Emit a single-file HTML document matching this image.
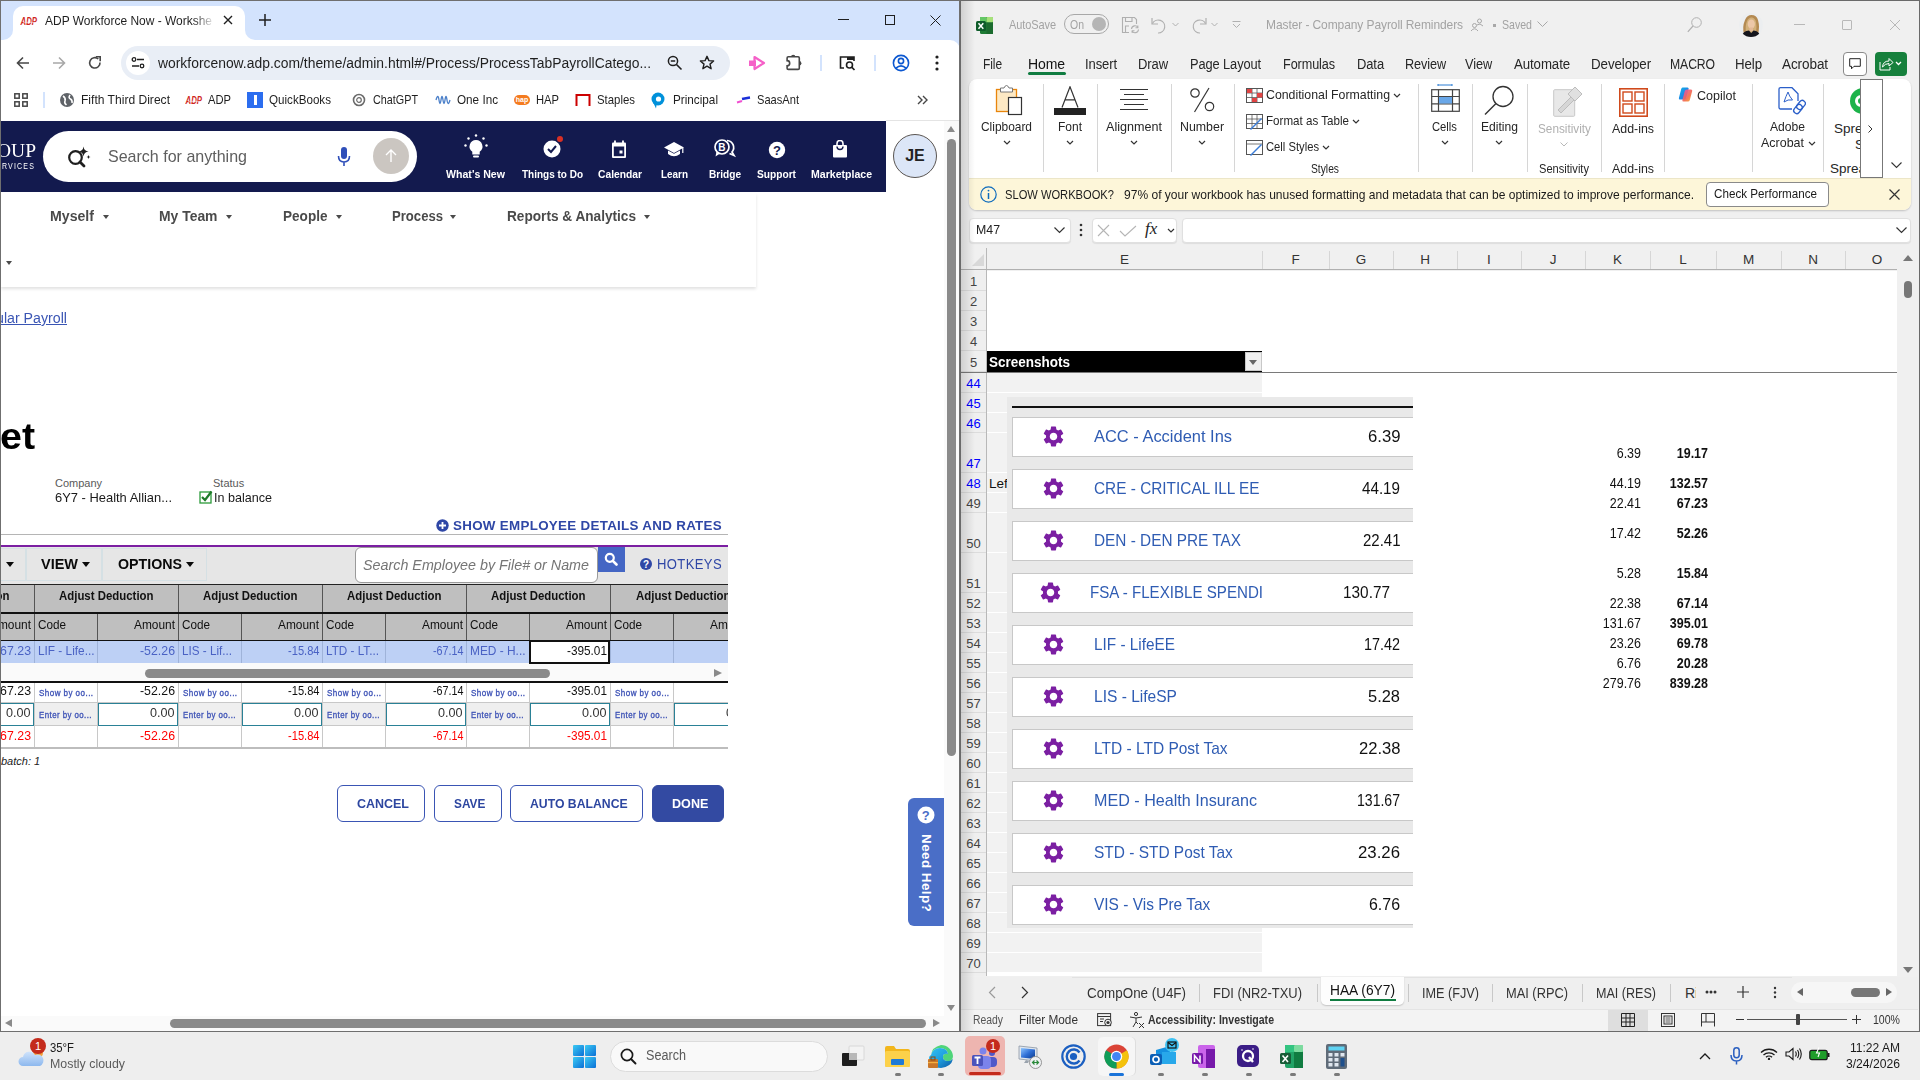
<!DOCTYPE html>
<html><head><meta charset="utf-8">
<style>
*{box-sizing:border-box}
html,body{margin:0;padding:0;width:1920px;height:1080px;overflow:hidden;background:#eeeeee;font-family:"Liberation Sans",sans-serif;}
.a{position:absolute}
.nw{white-space:nowrap}
svg{display:block}
.hl{font-size:11.5px;font-weight:bold;color:#fff;letter-spacing:0px;margin-top:0.5px}
.nav{font-size:14.5px;font-weight:bold;color:#4a4a4a}
.tri{width:0;height:0;border-left:3.5px solid transparent;border-right:3.5px solid transparent;border-top:4px solid #4a4a4a}
.tri2{width:0;height:0;border-left:4.5px solid transparent;border-right:4.5px solid transparent;border-top:5px solid #0a0a0a}
.th{font-size:13px;font-weight:bold;color:#111}
.td{font-size:13px;color:#111}
.tdn{font-size:13.5px}
.sb{font-size:9px;font-weight:normal;color:#3b50b5;letter-spacing:0.5px;-webkit-text-stroke:0.3px #3b50b5}
.btn{border:1px solid #3a55b4;border-radius:6px;background:#fff;color:#2d46a0;font-size:13px;font-weight:bold;text-align:center;line-height:35px;white-space:nowrap}
.rt{font-size:14px;color:#262626;letter-spacing:-0.1px}
.rl{font-size:13.5px;color:#262626}
.ch{font-size:13.5px;color:#333}
.rh{font-size:13px;color:#444;line-height:18px}
.card{font-size:17px;color:#2f5cb3}
.cardv{font-size:17px;color:#111}
.kl{font-size:14.5px;color:#111;transform:scaleX(0.86);transform-origin:100% 50%}
.stab{font-size:14px;color:#333}
.sbar{font-size:12px;color:#333}
.btt{font-size:13.5px;font-weight:bold;color:#2d46a0;line-height:16px}
.bm{font-size:13px;color:#1f1f1f;line-height:16px}
</style></head><body>

<!-- ================= CHROME WINDOW ================= -->
<div class="a" id="chrome" style="left:0;top:0;width:960px;height:1032px;background:#fff;overflow:hidden">
  <!-- tab strip -->
  <div class="a" style="left:0;top:0;width:960px;height:60px;background:#d3e3fd"></div>
  <!-- active tab -->
  <div class="a" style="left:13px;top:6px;width:232px;height:34px;background:#fff;border-radius:10px 10px 0 0"></div>
  <div class="a" style="left:3px;top:30px;width:10px;height:10px;background:#fff"></div>
  <div class="a" style="left:3px;top:30px;width:10px;height:10px;background:#d3e3fd;border-radius:0 0 10px 0"></div>
  <div class="a" style="left:245px;top:30px;width:10px;height:10px;background:#fff"></div>
  <div class="a" style="left:245px;top:30px;width:10px;height:10px;background:#d3e3fd;border-radius:0 0 0 10px"></div>
  <!-- toolbar white -->
  <div class="a" style="left:0;top:40px;width:960px;height:81px;background:#fff;border-radius:10px 10px 0 0"></div>
  <div class="a" style="left:0;top:40px;width:20px;height:12px;background:#fff"></div>

  <!-- tab content -->
  <svg class="a" style="left:20px;top:15px" width="18" height="11" viewBox="0 0 18 11"><text x="0.5" y="9.5" font-family="Liberation Sans" font-weight="bold" font-style="italic" font-size="10.5" fill="#d0271d" textLength="16.5" lengthAdjust="spacingAndGlyphs">ADP</text><path d="M3 7.3H15" stroke="#fff" stroke-width="0.6"/></svg>
  <div class="a" style="left:45px;top:13px;width:172px;height:18px;overflow:hidden;-webkit-mask-image:linear-gradient(90deg,#000 86%,transparent 99%)"><div class="a nw" style="transform:scaleX(0.9210);transform-origin:0 50%;left:0;top:0;font-size:13px;color:#1f1f1f">ADP Workforce Now - Workshe</div></div>
  <svg class="a" style="left:223px;top:15px" width="10" height="10" viewBox="0 0 10 10"><path d="M1 1L9 9M9 1L1 9" stroke="#1f1f1f" stroke-width="1.4"/></svg>
  <svg class="a" style="left:258px;top:13px" width="14" height="14" viewBox="0 0 14 14"><path d="M7 1V13M1 7H13" stroke="#1f1f1f" stroke-width="1.5"/></svg>
  <!-- window controls -->
  <div class="a" style="left:838px;top:19px;width:11px;height:1px;background:#1f1f1f"></div>
  <div class="a" style="left:885px;top:15px;width:10px;height:10px;border:1px solid #1f1f1f"></div>
  <svg class="a" style="left:930px;top:15px" width="11" height="11" viewBox="0 0 11 11"><path d="M0.5 0.5L10.5 10.5M10.5 0.5L0.5 10.5" stroke="#1f1f1f" stroke-width="1"/></svg>

  <!-- toolbar icons -->
  <svg class="a" style="left:16px;top:56px" width="14" height="14" viewBox="0 0 14 14"><path d="M13 7H2M7 1.5L1.5 7L7 12.5" stroke="#474747" stroke-width="1.6" fill="none"/></svg>
  <svg class="a" style="left:52px;top:56px" width="14" height="14" viewBox="0 0 14 14"><path d="M1 7H12M7 1.5L12.5 7L7 12.5" stroke="#a8a8a8" stroke-width="1.6" fill="none"/></svg>
  <svg class="a" style="left:88px;top:56px" width="14" height="14" viewBox="0 0 14 14"><path d="M12 6.5A5.2 5.2 0 1 1 10.3 3" stroke="#474747" stroke-width="1.6" fill="none"/><path d="M7.8 0.8H12.2V5.2" stroke="#474747" stroke-width="1.6" fill="none"/></svg>
  <!-- omnibox -->
  <div class="a" style="left:121px;top:46px;width:609px;height:34px;background:#e9eef6;border-radius:17px"></div>
  <div class="a" style="left:126px;top:51px;width:24px;height:24px;background:#fff;border-radius:12px"></div>
  <svg class="a" style="left:131px;top:56px" width="14" height="14" viewBox="0 0 14 14"><circle cx="3" cy="3.5" r="1.8" stroke="#1f1f1f" stroke-width="1.3" fill="none"/><path d="M6 3.5H13M1 10H8" stroke="#1f1f1f" stroke-width="1.3"/><circle cx="11" cy="10" r="1.8" stroke="#1f1f1f" stroke-width="1.3" fill="none"/></svg>
  <div class="a nw" style="transform:scaleX(0.9915);transform-origin:0 50%;left:158px;top:55px;font-size:14px;color:#1f1f1f;letter-spacing:0px" id="url">workforcenow.adp.com/theme/admin.html#/Process/ProcessTabPayrollCatego...</div>
  <svg class="a" style="left:667px;top:55px" width="16" height="16" viewBox="0 0 16 16"><circle cx="6" cy="6" r="4.6" stroke="#1f1f1f" stroke-width="1.5" fill="none"/><path d="M9.5 9.5L14.5 14.5M3.8 6H8.2" stroke="#1f1f1f" stroke-width="1.6"/></svg>
  <svg class="a" style="left:699px;top:55px" width="16" height="16" viewBox="0 0 16 16"><path d="M8 1.3L9.9 5.6L14.6 6L11 9.1L12.1 13.7L8 11.2L3.9 13.7L5 9.1L1.4 6L6.1 5.6Z" stroke="#1f1f1f" stroke-width="1.4" fill="none" stroke-linejoin="round"/></svg>
  <!-- extensions -->
  <svg class="a" style="left:748px;top:55px" width="18" height="16" viewBox="0 0 18 16"><path d="M6.5 2L16 8L6.5 14Z" stroke="#f560c8" stroke-width="2.2" fill="#fff" stroke-linejoin="round"/><rect x="1" y="5.5" width="7" height="5.5" fill="#f560c8"/></svg>
  <svg class="a" style="left:785px;top:54px" width="18" height="18" viewBox="0 0 18 18"><path d="M3.3 2.8H13.1Q14.3 2.8 14.3 4V14.2Q14.3 15.4 13.1 15.4H3.3Q2.1 15.4 2.1 14.2V11.8A2.6 2.6 0 0 0 2.1 6.6V4Q2.1 2.8 3.3 2.8Z" stroke="#474747" stroke-width="1.6" fill="none"/><path d="M6 2.9A2.2 2.2 0 0 1 10.4 2.9Z" fill="#474747"/><path d="M14.2 7A2.2 2.2 0 0 1 14.2 11.4Z" fill="#474747"/></svg>
  <div class="a" style="left:819.5px;top:55px;width:2px;height:16px;background:#d3e3fd"></div>
  <svg class="a" style="left:838px;top:54px" width="20" height="18" viewBox="0 0 20 18"><path d="M6 14H2.5V3H16V7" stroke="#1f1f1f" stroke-width="1.6" fill="none"/><rect x="9" y="3" width="7" height="3" fill="#1f1f1f"/><circle cx="11.5" cy="11" r="3" stroke="#1f1f1f" stroke-width="1.6" fill="none"/><path d="M13.7 13.2L16.5 16" stroke="#1f1f1f" stroke-width="1.7"/></svg>
  <div class="a" style="left:873.5px;top:55px;width:2px;height:16px;background:#d3e3fd"></div>
  <svg class="a" style="left:892px;top:54px" width="18" height="18" viewBox="0 0 18 18"><circle cx="9" cy="9" r="7.6" stroke="#0b57d0" stroke-width="1.6" fill="none"/><circle cx="9" cy="7" r="2.6" stroke="#0b57d0" stroke-width="1.6" fill="none"/><path d="M4 14.2Q9 9.5 14 14.2" stroke="#0b57d0" stroke-width="1.6" fill="none"/></svg>
  <svg class="a" style="left:934px;top:54px" width="6" height="18" viewBox="0 0 6 18"><circle cx="3" cy="3" r="1.6" fill="#1f1f1f"/><circle cx="3" cy="9" r="1.6" fill="#1f1f1f"/><circle cx="3" cy="15" r="1.6" fill="#1f1f1f"/></svg>

  <!-- bookmarks -->
  <svg class="a" style="left:14px;top:93px" width="14" height="14" viewBox="0 0 14 14"><g stroke="#474747" stroke-width="1.5" fill="none"><rect x="0.8" y="0.8" width="4.4" height="4.4"/><rect x="8.8" y="0.8" width="4.4" height="4.4"/><rect x="0.8" y="8.8" width="4.4" height="4.4"/><rect x="8.8" y="8.8" width="4.4" height="4.4"/></g></svg>
  <div class="a" style="left:43px;top:92px;width:2px;height:16px;background:#d3e3fd"></div>
  <svg class="a" style="left:60px;top:93px" width="14" height="14" viewBox="0 0 14 14"><circle cx="7" cy="7" r="7" fill="#5f6368"/><path d="M3 3Q6 5 5 8Q4 10 6.5 12M10 2Q8 5 10.5 6Q12.5 7 12 10" stroke="#fff" stroke-width="1.6" fill="none"/></svg>
  <div class="a nw bm" style="transform:scaleX(0.9286);transform-origin:0 50%;left:81px;top:92px">Fifth Third Direct</div>
  <svg class="a" style="left:185px;top:94px" width="18" height="11" viewBox="0 0 18 11"><text x="0.5" y="9.5" font-family="Liberation Sans" font-weight="bold" font-style="italic" font-size="10.5" fill="#d0271d" textLength="16.5" lengthAdjust="spacingAndGlyphs">ADP</text><path d="M3 7.3H15" stroke="#fff" stroke-width="0.6"/></svg>
  <div class="a nw bm" style="transform:scaleX(0.8603);transform-origin:0 50%;left:208px;top:92px">ADP</div>
  <div class="a" style="left:247px;top:92px;width:16px;height:16px;background:#2b6def"></div>
  <div class="a" style="left:254px;top:95px;width:3px;height:10px;background:#fff"></div>
  <div class="a nw bm" style="transform:scaleX(0.8937);transform-origin:0 50%;left:269px;top:92px">QuickBooks</div>
  <svg class="a" style="left:352px;top:93px" width="14" height="14" viewBox="0 0 14 14"><circle cx="7" cy="7" r="5.5" stroke="#6b6b6b" stroke-width="1.6" fill="none"/><circle cx="7" cy="7" r="2.3" stroke="#6b6b6b" stroke-width="1.2" fill="none"/></svg>
  <div class="a nw bm" style="transform:scaleX(0.8304);transform-origin:0 50%;left:373px;top:92px">ChatGPT</div>
  <svg class="a" style="left:435px;top:92px" width="16" height="16" viewBox="0 0 16 16"><path d="M1 8Q3 1 4 8Q5 15 6 8Q7 1 8 8Q9 15 10 8Q11 1 12 8Q13 15 15 8" stroke="#4a7fc9" stroke-width="1.3" fill="none"/></svg>
  <div class="a nw bm" style="transform:scaleX(0.9005);transform-origin:0 50%;left:457px;top:92px">One Inc</div>
  <div class="a" style="left:514px;top:95px;width:16px;height:10px;background:#f47b20;border-radius:5px"></div><div class="a nw" style="left:514px;top:95px;width:16px;text-align:center;font-size:7px;line-height:9px;color:#fff;font-weight:bold">hap</div>
  <div class="a nw bm" style="transform:scaleX(0.8603);transform-origin:0 50%;left:536px;top:92px">HAP</div>
  <svg class="a" style="left:575px;top:93px" width="16" height="14" viewBox="0 0 16 14"><path d="M1.5 13V2H14.5V13" stroke="#cc0000" stroke-width="2" fill="none"/></svg>
  <div class="a nw bm" style="transform:scaleX(0.8761);transform-origin:0 50%;left:597px;top:92px">Staples</div>
  <svg class="a" style="left:651px;top:92px" width="14" height="17" viewBox="0 0 14 17"><circle cx="7" cy="7" r="6.5" fill="#0091da"/><circle cx="7.5" cy="7" r="2.6" fill="#fff"/><path d="M2 10L5 16.5L6 10Z" fill="#0091da"/></svg>
  <div class="a nw bm" style="transform:scaleX(0.9025);transform-origin:0 50%;left:673px;top:92px">Principal</div>
  <svg class="a" style="left:736px;top:96px" width="15" height="8" viewBox="0 0 15 8"><path d="M1 6.5L6 5" stroke="#f050d0" stroke-width="2"/><path d="M6 3L14 1.5" stroke="#1a2fd8" stroke-width="2.4"/></svg>
  <div class="a nw bm" style="transform:scaleX(0.8544);transform-origin:0 50%;left:757px;top:92px">SaasAnt</div>
  <svg class="a" style="left:917px;top:95px" width="12" height="10" viewBox="0 0 12 10"><path d="M1 1L5 5L1 9M6 1L10 5L6 9" stroke="#474747" stroke-width="1.4" fill="none"/></svg>


  <!-- ============ ADP PAGE ============ -->
  <div class="a" style="left:1px;top:121px;width:885px;height:71px;background:#131a4e"></div>
  <div class="a" style="left:886px;top:120px;width:73px;height:1px;background:#e4e4e4"></div>
  <!-- logo fragment -->
  <div class="a nw" style="transform:scaleX(1.0259);transform-origin:0 50%;left:-3px;top:139px;font-family:'Liberation Serif',serif;font-size:19px;line-height:24px;color:#fff">OUP</div>
  <div class="a nw" style="transform:scaleX(0.7790);transform-origin:0 50%;left:2px;top:161px;font-size:9px;line-height:10px;color:#fff;letter-spacing:1.5px">RVICES</div>
  <!-- search pill -->
  <div class="a" style="left:43px;top:131px;width:374px;height:51px;background:#fff;border-radius:26px"></div>
  <svg class="a" style="left:66px;top:144px" width="26" height="26" viewBox="0 0 26 26"><circle cx="9.5" cy="13.5" r="6.3" stroke="#1f1f1f" stroke-width="2.2" fill="none"/><path d="M14 18L18 22" stroke="#1f1f1f" stroke-width="2.8" stroke-linecap="round"/><path d="M17.5 2.5Q18 7 22.5 7.5Q18 8 17.5 12.5Q17 8 12.5 7.5Q17 7 17.5 2.5Z" fill="#1f1f1f"/><path d="M22.5 11Q22.7 12.8 24.5 13Q22.7 13.2 22.5 15Q22.3 13.2 20.5 13Q22.3 12.8 22.5 11Z" fill="#1f1f1f"/></svg>
  <div class="a nw" style="transform:scaleX(0.9429);transform-origin:0 50%;left:108px;top:147px;font-size:17px;color:#5e5e5e">Search for anything</div>
  <svg class="a" style="left:337px;top:146px" width="14" height="22" viewBox="0 0 14 22"><rect x="4" y="1" width="6" height="12" rx="3" fill="#2f4fb9"/><path d="M1.5 10Q1.5 16 7 16Q12.5 16 12.5 10M7 16V20" stroke="#2f4fb9" stroke-width="1.6" fill="none"/></svg>
  <div class="a" style="left:373px;top:138px;width:36px;height:36px;background:#cbc6c1;border-radius:18px"></div>
  <svg class="a" style="left:383px;top:148px" width="16" height="16" viewBox="0 0 16 16"><path d="M8 14V2M3 7L8 2L13 7" stroke="#fff" stroke-width="1.4" fill="none"/></svg>
  <!-- header icons -->
  <svg class="a" style="left:463px;top:134px" width="26" height="26" viewBox="0 0 26 26"><path d="M13 6A6.5 6.5 0 0 0 9.3 17.8V20.5H16.7V17.8A6.5 6.5 0 0 0 13 6Z" fill="#fff"/><rect x="10" y="21.5" width="6" height="2" rx="1" fill="#fff"/><circle cx="13" cy="1.5" r="1.2" fill="#fff"/><circle cx="5.5" cy="4.5" r="1.2" fill="#fff"/><circle cx="20.5" cy="4.5" r="1.2" fill="#fff"/><circle cx="2.5" cy="11.5" r="1.2" fill="#fff"/><circle cx="23.5" cy="11.5" r="1.2" fill="#fff"/></svg>
  <div class="a nw hl" style="transform:scaleX(0.9208);transform-origin:0 50%;left:446px;top:167px">What's New</div>
  <svg class="a" style="left:540px;top:134px" width="26" height="26" viewBox="0 0 26 26"><circle cx="12" cy="15" r="8.5" fill="#fff"/><path d="M8 15L11 18L16 12" stroke="#131a4e" stroke-width="2" fill="none"/><circle cx="20" cy="5" r="4" fill="#131a4e"/><circle cx="20" cy="5" r="3" fill="#d93025"/></svg>
  <div class="a nw hl" style="transform:scaleX(0.8681);transform-origin:0 50%;left:522px;top:167px">Things to Do</div>
  <svg class="a" style="left:611px;top:140px" width="16" height="19" viewBox="0 0 16 19"><path d="M4 0.5V3M12 0.5V3" stroke="#fff" stroke-width="1.8"/><rect x="1" y="2.5" width="14" height="15.5" rx="1" fill="#fff"/><rect x="2.8" y="6.5" width="10.4" height="9.7" fill="#131a4e"/><rect x="8.5" y="10.5" width="3" height="3" fill="#fff"/></svg>
  <div class="a nw hl" style="transform:scaleX(0.8940);transform-origin:0 50%;left:598px;top:167px">Calendar</div>
  <svg class="a" style="left:663px;top:141px" width="22" height="18" viewBox="0 0 22 18"><path d="M11 1L21 6.5L11 12L1 6.5Z" fill="#fff"/><path d="M5 9.5V13Q11 17.5 17 13V9.5L11 12.8Z" fill="#fff"/><path d="M19.8 7V12" stroke="#fff" stroke-width="1.2"/></svg>
  <div class="a nw hl" style="transform:scaleX(0.8618);transform-origin:0 50%;left:661px;top:167px">Learn</div>
  <svg class="a" style="left:713px;top:139px" width="24" height="19" viewBox="0 0 24 19"><circle cx="9" cy="8" r="7" stroke="#fff" stroke-width="1.7" fill="#131a4e"/><path d="M3.5 12.5L2.5 17.5L7 14.5" fill="#fff"/><path d="M14 1.5A7 7 0 0 1 19 13L21 16.5L16.5 14.5" stroke="#fff" stroke-width="1.7" fill="none"/><text x="5.2" y="11.8" font-family="Liberation Sans" font-weight="bold" font-size="10" fill="#fff">B</text></svg>
  <div class="a nw hl" style="transform:scaleX(0.8786);transform-origin:0 50%;left:709px;top:167px">Bridge</div>
  <svg class="a" style="left:768px;top:141px" width="18" height="18" viewBox="0 0 18 18"><circle cx="9" cy="9" r="8.2" fill="#fff"/><text x="5" y="14" font-family="Liberation Sans" font-weight="bold" font-size="13" fill="#131a4e">?</text></svg>
  <div class="a nw hl" style="transform:scaleX(0.8848);transform-origin:0 50%;left:757px;top:167px">Support</div>
  <svg class="a" style="left:832px;top:140px" width="16" height="18" viewBox="0 0 16 18"><path d="M5 5V3.5A3 3 0 0 1 11 3.5V5" stroke="#fff" stroke-width="1.6" fill="none"/><rect x="1" y="5" width="14" height="12.5" rx="1" fill="#fff"/><path d="M5 6.5A3 3 0 0 0 11 6.5" stroke="#131a4e" stroke-width="1.4" fill="none"/></svg>
  <div class="a nw hl" style="transform:scaleX(0.9175);transform-origin:0 50%;left:811px;top:167px">Marketplace</div>
  <!-- avatar -->
  <div class="a" style="left:893px;top:134px;width:44px;height:44px;border-radius:22px;background:#dce6f7;border:1px solid #5a5552"></div>
  <div class="a nw" style="left:893px;top:147px;width:44px;text-align:center;font-size:16px;font-weight:bold;color:#222">JE</div>

  <!-- nav dropdown panel -->
  <div class="a" style="left:1px;top:193px;width:755px;height:94px;background:#fff;box-shadow:0 2px 3px rgba(0,0,0,0.12)"></div>
  <div class="a nw nav" style="transform:scaleX(0.9747);transform-origin:0 50%;left:50px;top:208px">Myself</div><div class="a tri" style="left:103px;top:215px"></div>
  <div class="a nw nav" style="transform:scaleX(0.9593);transform-origin:0 50%;left:158.5px;top:208px">My Team</div><div class="a tri" style="left:226px;top:215px"></div>
  <div class="a nw nav" style="transform:scaleX(0.9359);transform-origin:0 50%;left:282.5px;top:208px">People</div><div class="a tri" style="left:336px;top:215px"></div>
  <div class="a nw nav" style="transform:scaleX(0.9037);transform-origin:0 50%;left:391.5px;top:208px">Process</div><div class="a tri" style="left:450px;top:215px"></div>
  <div class="a nw nav" style="transform:scaleX(0.9399);transform-origin:0 50%;left:507px;top:208px">Reports &amp; Analytics</div><div class="a tri" style="left:644px;top:215px"></div>
  <div class="a tri" style="left:6px;top:261px"></div>

  <!-- breadcrumb -->
  <div class="a nw" style="transform:scaleX(1.0138);transform-origin:0 50%;left:-4px;top:310px;font-size:14px;color:#3a55b4;text-decoration:underline">ular Payroll</div>
  <!-- big title -->
  <div class="a nw" style="transform:scaleX(1.0636);transform-origin:0 50%;left:0px;top:416px;font-size:37px;font-weight:bold;color:#000">et</div>
  <div class="a nw" style="left:55px;top:477px;font-size:11px;color:#595959">Company</div>
  <div class="a nw" style="transform:scaleX(0.9932);transform-origin:0 50%;left:55px;top:490px;font-size:13px;color:#1a1a1a">6Y7 - Health Allian...</div>
  <div class="a nw" style="left:213px;top:477px;font-size:11px;color:#595959">Status</div>
  <svg class="a" style="left:199px;top:490px" width="14" height="14" viewBox="0 0 14 14"><rect x="1" y="2" width="11" height="11" stroke="#2c9a3a" stroke-width="1.3" fill="#fff"/><path d="M3 7L6 10L12.5 1.5" stroke="#1f7a2a" stroke-width="2.2" fill="none"/></svg>
  <div class="a nw" style="transform:scaleX(0.9667);transform-origin:0 50%;left:214px;top:490px;font-size:13px;color:#1a1a1a">In balance</div>

  <!-- show employee details -->
  <svg class="a" style="left:436px;top:519px" width="13" height="13" viewBox="0 0 13 13"><circle cx="6.5" cy="6.5" r="6.2" fill="#2f47a6"/><path d="M6.5 3V10M3 6.5H10" stroke="#fff" stroke-width="1.8"/></svg>
  <div class="a nw" style="transform:scaleX(0.9906);transform-origin:0 50%;left:453px;top:518px;font-size:13.5px;font-weight:bold;color:#2f47a6;letter-spacing:0.3px">SHOW EMPLOYEE DETAILS AND RATES</div>
  <div class="a" style="left:1px;top:534px;width:727px;height:1px;background:#b5b5b5"></div>
  <div class="a" style="left:1px;top:545px;width:727px;height:2px;background:#7b1fa2"></div>
  <!-- toolbar -->
  <div class="a" style="left:1px;top:547px;width:727px;height:37px;background:#e6e6e6"></div>
  <div class="a" style="left:-5px;top:548px;width:31px;height:33px;border:1px solid #d5e0e4"></div>
  <div class="a" style="left:26px;top:548px;width:76px;height:33px;border:1px solid #d5e0e4"></div>
  <div class="a" style="left:102px;top:548px;width:105px;height:33px;border:1px solid #d5e0e4"></div>
  <div class="a tri2" style="left:6px;top:562px"></div>
  <div class="a nw" style="transform:scaleX(1.0341);transform-origin:0 50%;left:41px;top:556px;font-size:14px;font-weight:bold;color:#0a0a0a">VIEW</div><div class="a tri2" style="left:82px;top:562px"></div>
  <div class="a nw" style="transform:scaleX(1.0156);transform-origin:0 50%;left:118px;top:556px;font-size:14px;font-weight:bold;color:#0a0a0a">OPTIONS</div><div class="a tri2" style="left:186px;top:562px"></div>
  <div class="a" style="left:355px;top:547px;width:243px;height:36px;background:#fff;border:1px solid #9a9a9a;border-radius:6px"></div>
  <div class="a nw" style="transform:scaleX(1.0226);transform-origin:0 50%;left:363px;top:557px;font-size:14px;font-style:italic;color:#757575">Search Employee by File# or Name</div>
  <div class="a" style="left:598px;top:547px;width:27px;height:25px;background:#4466c4"></div>
  <svg class="a" style="left:604px;top:552px" width="14" height="14" viewBox="0 0 14 14"><circle cx="5.8" cy="5.8" r="4" stroke="#fff" stroke-width="2.2" fill="none"/><path d="M8.8 8.8L12.5 12.5" stroke="#fff" stroke-width="2.6" stroke-linecap="round"/></svg>
  <svg class="a" style="left:640px;top:558px" width="12" height="12" viewBox="0 0 12 12"><circle cx="6" cy="6" r="6" fill="#2f47a6"/><text x="3" y="10" font-family="Liberation Sans" font-weight="bold" font-size="10" fill="#fff">?</text></svg>
  <div class="a nw" style="transform:scaleX(0.9323);transform-origin:0 50%;left:657px;top:556px;font-size:14px;color:#2f47a6;letter-spacing:0.4px">HOTKEYS</div>
  <!-- table -->
  <div class="a" style="left:1px;top:584px;width:727px;height:165px;background:#fff;overflow:hidden" id="tbl">

<div class="a" style="left:0;top:0;width:727px;height:1px;background:#222"></div>
<div class="a" style="left:0;top:1px;width:727px;height:27px;background:#bfbfbf"></div>
<div class="a" style="left:0;top:28px;width:727px;height:2px;background:#111"></div>
<div class="a" style="left:0;top:30px;width:727px;height:26px;background:#bfbfbf"></div>
<div class="a" style="left:0;top:56px;width:727px;height:1px;background:#111"></div>
<div class="a" style="left:0;top:57px;width:727px;height:22px;background:#bdd0f5"></div>
<div class="a" style="left:0;top:79px;width:727px;height:18px;background:#fafafa"></div>
<div class="a" style="left:144px;top:85px;width:405px;height:9px;background:#8a8a8a;border-radius:5px"></div>
<div class="a" style="left:713px;top:85px;width:0;height:0;border-top:4.5px solid transparent;border-bottom:4.5px solid transparent;border-left:8px solid #8a8a8a"></div>
<div class="a" style="left:0;top:97px;width:727px;height:2px;background:#111"></div>
<div class="a" style="left:0;top:118px;width:727px;height:1px;background:#c8c8c8"></div>
<div class="a" style="left:0;top:141px;width:727px;height:1px;background:#c8c8c8"></div>
<div class="a" style="left:0;top:163px;width:727px;height:2px;background:#bdbdbd"></div>
<div class="a" style="left:33px;top:1px;width:1px;height:27px;background:#555"></div>
<div class="a" style="left:177px;top:1px;width:1px;height:27px;background:#555"></div>
<div class="a" style="left:321px;top:1px;width:1px;height:27px;background:#555"></div>
<div class="a" style="left:465px;top:1px;width:1px;height:27px;background:#555"></div>
<div class="a" style="left:609px;top:1px;width:1px;height:27px;background:#555"></div>
<div class="a" style="left:33px;top:30px;width:1px;height:26px;background:#555"></div>
<div class="a" style="left:33px;top:57px;width:1px;height:22px;background:#9fb3d9"></div>
<div class="a" style="left:33px;top:99px;width:1px;height:64px;background:#c8c8c8"></div>
<div class="a" style="left:96px;top:30px;width:1px;height:26px;background:#555"></div>
<div class="a" style="left:96px;top:57px;width:1px;height:22px;background:#9fb3d9"></div>
<div class="a" style="left:96px;top:99px;width:1px;height:64px;background:#c8c8c8"></div>
<div class="a" style="left:177px;top:30px;width:1px;height:26px;background:#555"></div>
<div class="a" style="left:177px;top:57px;width:1px;height:22px;background:#9fb3d9"></div>
<div class="a" style="left:177px;top:99px;width:1px;height:64px;background:#c8c8c8"></div>
<div class="a" style="left:240px;top:30px;width:1px;height:26px;background:#555"></div>
<div class="a" style="left:240px;top:57px;width:1px;height:22px;background:#9fb3d9"></div>
<div class="a" style="left:240px;top:99px;width:1px;height:64px;background:#c8c8c8"></div>
<div class="a" style="left:321px;top:30px;width:1px;height:26px;background:#555"></div>
<div class="a" style="left:321px;top:57px;width:1px;height:22px;background:#9fb3d9"></div>
<div class="a" style="left:321px;top:99px;width:1px;height:64px;background:#c8c8c8"></div>
<div class="a" style="left:384px;top:30px;width:1px;height:26px;background:#555"></div>
<div class="a" style="left:384px;top:57px;width:1px;height:22px;background:#9fb3d9"></div>
<div class="a" style="left:384px;top:99px;width:1px;height:64px;background:#c8c8c8"></div>
<div class="a" style="left:465px;top:30px;width:1px;height:26px;background:#555"></div>
<div class="a" style="left:465px;top:57px;width:1px;height:22px;background:#9fb3d9"></div>
<div class="a" style="left:465px;top:99px;width:1px;height:64px;background:#c8c8c8"></div>
<div class="a" style="left:528px;top:30px;width:1px;height:26px;background:#555"></div>
<div class="a" style="left:528px;top:57px;width:1px;height:22px;background:#9fb3d9"></div>
<div class="a" style="left:528px;top:99px;width:1px;height:64px;background:#c8c8c8"></div>
<div class="a" style="left:609px;top:30px;width:1px;height:26px;background:#555"></div>
<div class="a" style="left:609px;top:57px;width:1px;height:22px;background:#9fb3d9"></div>
<div class="a" style="left:609px;top:99px;width:1px;height:64px;background:#c8c8c8"></div>
<div class="a" style="left:672px;top:30px;width:1px;height:26px;background:#555"></div>
<div class="a" style="left:672px;top:57px;width:1px;height:22px;background:#9fb3d9"></div>
<div class="a" style="left:672px;top:99px;width:1px;height:64px;background:#c8c8c8"></div>
<div class="a nw th" style="transform:scaleX(0.8782);transform-origin:0 50%;left:-86.25px;top:4px">Adjust Deduction</div>
<div class="a nw th" style="transform:scaleX(0.8782);transform-origin:0 50%;left:57.75px;top:4px">Adjust Deduction</div>
<div class="a nw th" style="transform:scaleX(0.8782);transform-origin:0 50%;left:201.75px;top:4px">Adjust Deduction</div>
<div class="a nw th" style="transform:scaleX(0.8782);transform-origin:0 50%;left:345.75px;top:4px">Adjust Deduction</div>
<div class="a nw th" style="transform:scaleX(0.8782);transform-origin:0 50%;left:489.75px;top:4px">Adjust Deduction</div>
<div class="a nw th" style="transform:scaleX(0.8782);transform-origin:0 50%;left:634.75px;top:4px">Adjust Deduction</div>
<div class="a nw td" style="transform:scaleX(0.9149);transform-origin:0 50%;left:-11.00px;top:33px;">Amount</div>
<div class="a nw td" style="transform:scaleX(0.9010);transform-origin:0 50%;left:37.00px;top:33px;">Code</div>
<div class="a nw td" style="transform:scaleX(0.9149);transform-origin:0 50%;left:133.00px;top:33px;">Amount</div>
<div class="a nw td" style="transform:scaleX(0.9010);transform-origin:0 50%;left:181.00px;top:33px;">Code</div>
<div class="a nw td" style="transform:scaleX(0.9149);transform-origin:0 50%;left:277.00px;top:33px;">Amount</div>
<div class="a nw td" style="transform:scaleX(0.9010);transform-origin:0 50%;left:325.00px;top:33px;">Code</div>
<div class="a nw td" style="transform:scaleX(0.9149);transform-origin:0 50%;left:421.00px;top:33px;">Amount</div>
<div class="a nw td" style="transform:scaleX(0.9010);transform-origin:0 50%;left:469.00px;top:33px;">Code</div>
<div class="a nw td" style="transform:scaleX(0.9149);transform-origin:0 50%;left:565.00px;top:33px;">Amount</div>
<div class="a nw td" style="transform:scaleX(0.9010);transform-origin:0 50%;left:613.00px;top:33px;">Code</div>
<div class="a nw td" style="transform:scaleX(0.9149);transform-origin:0 50%;left:709.00px;top:33px;">Amount</div>
<div class="a nw tdn" style="transform:scaleX(0.9143);transform-origin:0 50%;left:-5.00px;top:59px;color:#4a62c4">-67.23</div>
<div class="a nw tdn" style="transform:scaleX(0.8755);transform-origin:0 50%;left:37.00px;top:59px;color:#4a62c4">LIF - Life...</div>
<div class="a nw tdn" style="transform:scaleX(0.9143);transform-origin:0 50%;left:139.00px;top:59px;color:#4a62c4">-52.26</div>
<div class="a nw tdn" style="transform:scaleX(0.8653);transform-origin:0 50%;left:181.00px;top:59px;color:#4a62c4">LIS - Lif...</div>
<div class="a nw tdn" style="transform:scaleX(0.8229);transform-origin:0 50%;left:286.50px;top:59px;color:#4a62c4">-15.84</div>
<div class="a nw tdn" style="transform:scaleX(0.8686);transform-origin:0 50%;left:325.00px;top:59px;color:#4a62c4">LTD - LT...</div>
<div class="a nw tdn" style="transform:scaleX(0.7967);transform-origin:0 50%;left:431.50px;top:59px;color:#4a62c4">-67.14</div>
<div class="a nw tdn" style="transform:scaleX(0.8810);transform-origin:0 50%;left:469.00px;top:59px;color:#4a62c4">MED - H...</div>
<div class="a" style="left:528px;top:56px;width:81px;height:24px;background:#fff;border:2px solid #111"></div>
<div class="a nw tdn" style="transform:scaleX(0.8734);transform-origin:0 50%;left:566.00px;top:59px;color:#111">-395.01</div>
<div class="a" style="left:-30px;top:119px;width:63px;height:23px;background:#fff;border:1px solid #2a8196"></div>
<div class="a nw tdn" style="transform:scaleX(0.9322);transform-origin:0 50%;left:4.50px;top:121px;color:#333">0.00</div>
<div class="a nw tdn" style="transform:scaleX(0.9143);transform-origin:0 50%;left:-5.00px;top:99px;color:#111">-67.23</div>
<div class="a nw tdn" style="transform:scaleX(0.9143);transform-origin:0 50%;left:-5.00px;top:144px;color:#ff0000">-67.23</div>
<div class="a" style="left:34px;top:119px;width:62px;height:22px;background:#efefef"></div>
<div class="a nw sb" style="transform:scaleX(0.8928);transform-origin:0 50%;left:37.75px;top:104px;">Show by oo...</div>
<div class="a nw sb" style="transform:scaleX(0.8756);transform-origin:0 50%;left:37.75px;top:126px;">Enter by oo...</div>
<div class="a" style="left:97px;top:119px;width:80px;height:23px;background:#fff;border:1px solid #2a8196"></div>
<div class="a nw tdn" style="transform:scaleX(0.9322);transform-origin:0 50%;left:148.50px;top:121px;color:#333">0.00</div>
<div class="a nw tdn" style="transform:scaleX(0.9143);transform-origin:0 50%;left:139.00px;top:99px;color:#111">-52.26</div>
<div class="a nw tdn" style="transform:scaleX(0.9143);transform-origin:0 50%;left:139.00px;top:144px;color:#ff0000">-52.26</div>
<div class="a" style="left:178px;top:119px;width:62px;height:22px;background:#efefef"></div>
<div class="a nw sb" style="transform:scaleX(0.8928);transform-origin:0 50%;left:181.75px;top:104px;">Show by oo...</div>
<div class="a nw sb" style="transform:scaleX(0.8756);transform-origin:0 50%;left:181.75px;top:126px;">Enter by oo...</div>
<div class="a" style="left:241px;top:119px;width:80px;height:23px;background:#fff;border:1px solid #2a8196"></div>
<div class="a nw tdn" style="transform:scaleX(0.9322);transform-origin:0 50%;left:292.50px;top:121px;color:#333">0.00</div>
<div class="a nw tdn" style="transform:scaleX(0.8229);transform-origin:0 50%;left:286.50px;top:99px;color:#111">-15.84</div>
<div class="a nw tdn" style="transform:scaleX(0.8229);transform-origin:0 50%;left:286.50px;top:144px;color:#ff0000">-15.84</div>
<div class="a" style="left:322px;top:119px;width:62px;height:22px;background:#efefef"></div>
<div class="a nw sb" style="transform:scaleX(0.8928);transform-origin:0 50%;left:325.75px;top:104px;">Show by oo...</div>
<div class="a nw sb" style="transform:scaleX(0.8756);transform-origin:0 50%;left:325.75px;top:126px;">Enter by oo...</div>
<div class="a" style="left:385px;top:119px;width:80px;height:23px;background:#fff;border:1px solid #2a8196"></div>
<div class="a nw tdn" style="transform:scaleX(0.9322);transform-origin:0 50%;left:436.50px;top:121px;color:#333">0.00</div>
<div class="a nw tdn" style="transform:scaleX(0.7967);transform-origin:0 50%;left:431.50px;top:99px;color:#111">-67.14</div>
<div class="a nw tdn" style="transform:scaleX(0.7967);transform-origin:0 50%;left:431.50px;top:144px;color:#ff0000">-67.14</div>
<div class="a" style="left:466px;top:119px;width:62px;height:22px;background:#efefef"></div>
<div class="a nw sb" style="transform:scaleX(0.8928);transform-origin:0 50%;left:469.75px;top:104px;">Show by oo...</div>
<div class="a nw sb" style="transform:scaleX(0.8756);transform-origin:0 50%;left:469.75px;top:126px;">Enter by oo...</div>
<div class="a" style="left:529px;top:119px;width:80px;height:23px;background:#fff;border:1px solid #2a8196"></div>
<div class="a nw tdn" style="transform:scaleX(0.9322);transform-origin:0 50%;left:580.50px;top:121px;color:#333">0.00</div>
<div class="a nw tdn" style="transform:scaleX(0.8734);transform-origin:0 50%;left:566.00px;top:99px;color:#111">-395.01</div>
<div class="a nw tdn" style="transform:scaleX(0.8734);transform-origin:0 50%;left:566.00px;top:144px;color:#ff0000">-395.01</div>
<div class="a" style="left:610px;top:119px;width:62px;height:22px;background:#efefef"></div>
<div class="a nw sb" style="transform:scaleX(0.8928);transform-origin:0 50%;left:613.75px;top:104px;">Show by oo...</div>
<div class="a nw sb" style="transform:scaleX(0.8756);transform-origin:0 50%;left:613.75px;top:126px;">Enter by oo...</div>
<div class="a" style="left:673px;top:119px;width:80px;height:23px;background:#fff;border:1px solid #2a8196"></div>
<div class="a nw tdn" style="transform:scaleX(0.9322);transform-origin:0 50%;left:724.50px;top:121px;color:#333">0.00</div>
  </div>
  <div class="a nw" style="left:1px;top:755px;font-size:11px;font-style:italic;color:#222">batch: 1</div>
  <!-- buttons -->
  <div class="a btn" style="left:337px;top:785px;width:88px;height:37px"></div>
  <div class="a btn" style="left:434px;top:785px;width:68px;height:37px"></div>
  <div class="a btn" style="left:510px;top:785px;width:133px;height:37px"></div>
  <div class="a btn" style="left:652px;top:785px;width:72px;height:37px;background:#334aa2;border-color:#334aa2"></div>
  <div class="a nw btt" style="transform:scaleX(0.9244);transform-origin:0 50%;left:357.4px;top:796px">CANCEL</div>
  <div class="a nw btt" style="transform:scaleX(0.8751);transform-origin:0 50%;left:453.7px;top:796px">SAVE</div>
  <div class="a nw btt" style="transform:scaleX(0.9067);transform-origin:0 50%;left:529.6px;top:796px">AUTO BALANCE</div>
  <div class="a nw btt" style="transform:scaleX(0.9330);transform-origin:0 50%;left:672px;top:796px;color:#fff">DONE</div>
  <!-- need help -->
  <div class="a" style="left:908px;top:798px;width:36px;height:128px;background:#4a6ec7;border-radius:6px 0 0 6px"></div>
  <svg class="a" style="left:917px;top:806px" width="18" height="18" viewBox="0 0 18 18"><circle cx="9" cy="9" r="8.5" fill="#fff"/><text x="4.8" y="14" font-family="Liberation Sans" font-weight="bold" font-size="13" fill="#4a6ec7">?</text></svg>
  <div class="a nw" style="left:934px;top:834px;font-size:13.5px;font-weight:bold;color:#fff;transform-origin:0 0;transform:rotate(90deg);letter-spacing:0.4px;line-height:16px">Need Help?</div>
  <!-- page scrollbars -->
  <div class="a" style="left:944px;top:121px;width:15px;height:895px;background:#fafafa"></div>
  <div class="a" style="left:947px;top:126px;width:0;height:0;border-left:4.5px solid transparent;border-right:4.5px solid transparent;border-bottom:6px solid #8a8a8a"></div>
  <div class="a" style="left:947px;top:139px;width:9px;height:617px;background:#8a8a8a;border-radius:5px"></div>
  <div class="a" style="left:947px;top:1005px;width:0;height:0;border-left:4.5px solid transparent;border-right:4.5px solid transparent;border-top:6px solid #8a8a8a"></div>
  <div class="a" style="left:1px;top:1016px;width:958px;height:15px;background:#fafafa"></div>
  <div class="a" style="left:5px;top:1019px;width:0;height:0;border-top:4.5px solid transparent;border-bottom:4.5px solid transparent;border-right:7px solid #8a8a8a"></div>
  <div class="a" style="left:170px;top:1019px;width:756px;height:9px;background:#8a8a8a;border-radius:5px"></div>
  <div class="a" style="left:933px;top:1019px;width:0;height:0;border-top:4.5px solid transparent;border-bottom:4.5px solid transparent;border-left:7px solid #8a8a8a"></div>
  <!-- chrome border -->
  <div class="a" style="left:0;top:0;width:960px;height:1032px;border:1px solid #6f6f6f;pointer-events:none;z-index:50"></div>
</div>

<!-- ================= EXCEL WINDOW ================= -->
<div class="a" id="excel" style="left:960px;top:0;width:960px;height:1032px;background:#f0f0f0;overflow:hidden">


  <!-- shadow at left -->
  
  <!-- title bar -->
  <svg class="a" style="left:16px;top:17px" width="17" height="17" viewBox="0 0 17 17"><rect x="4" y="0" width="13" height="17" rx="1.5" fill="#1e7b34"/><rect x="4" y="0" width="6.5" height="5.5" fill="#64c765"/><rect x="10.5" y="0" width="6.5" height="5.5" rx="1" fill="#a7e27a"/><rect x="10.5" y="5.5" width="6.5" height="11.5" fill="#1b6b2e"/><rect x="0" y="4" width="10" height="10" rx="1.5" fill="#0e5c2a"/><path d="M2.5 6.3L7.3 11.7M7.3 6.3L2.5 11.7" stroke="#fff" stroke-width="1.5"/></svg>
  <div class="a nw" style="transform:scaleX(0.8457);transform-origin:0 50%;left:49px;top:17px;font-size:13px;color:#a3a3a3;letter-spacing:-0.1px">AutoSave</div>
  <div class="a" style="left:104px;top:14px;width:45px;height:20px;border:1px solid #a8a8a8;border-radius:10px"></div>
  <div class="a nw" style="transform:scaleX(0.8390);transform-origin:0 50%;left:110px;top:18px;font-size:12.5px;color:#a3a3a3">On</div>
  <div class="a" style="left:132px;top:17px;width:14px;height:14px;background:#b5b5b5;border-radius:7px"></div>
  <svg class="a" style="left:161px;top:16px" width="19" height="18" viewBox="0 0 19 18"><path d="M8 16.5H1.5V1.5H13.5L15.5 3.5V8" stroke="#b0b0b0" stroke-width="1.1" fill="none"/><path d="M4.5 1.5V5.5H11V1.5M4.5 16.5V10H8" stroke="#b0b0b0" stroke-width="1.1" fill="none"/><path d="M10.5 13A3.5 3.5 0 0 1 17 11.5M17.5 13.5A3.5 3.5 0 0 1 11 15" stroke="#b0b0b0" stroke-width="1.1" fill="none"/><path d="M16.8 9.5V11.8H14.5M11.2 17V14.8H13.5" stroke="#b0b0b0" stroke-width="1.1" fill="none"/></svg>
  <svg class="a" style="left:190px;top:16px" width="18" height="18" viewBox="0 0 18 18"><path d="M2 2V8H8" stroke="#b0b0b0" stroke-width="1.2" fill="none"/><path d="M2.5 7.5A6.5 6.5 0 1 1 8 17" stroke="#b0b0b0" stroke-width="1.2" fill="none"/></svg>
  <svg class="a" style="left:212px;top:22px" width="7" height="5" viewBox="0 0 7 5"><path d="M0.5 1L3.5 4L6.5 1" stroke="#b0b0b0" stroke-width="1" fill="none"/></svg>
  <svg class="a" style="left:230px;top:16px" width="18" height="18" viewBox="0 0 18 18"><path d="M16 2V8H10" stroke="#b0b0b0" stroke-width="1.2" fill="none"/><path d="M15.5 7.5A6.5 6.5 0 1 0 10 17" stroke="#b0b0b0" stroke-width="1.2" fill="none"/></svg>
  <svg class="a" style="left:251px;top:22px" width="7" height="5" viewBox="0 0 7 5"><path d="M0.5 1L3.5 4L6.5 1" stroke="#b0b0b0" stroke-width="1" fill="none"/></svg>
  <svg class="a" style="left:272px;top:21px" width="9" height="8" viewBox="0 0 9 8"><path d="M0.5 0.5H8.5M1 3L4.5 6.5L8 3" stroke="#b0b0b0" stroke-width="1" fill="none"/></svg>
  <div class="a nw" style="transform:scaleX(0.8887);transform-origin:0 50%;left:306px;top:17px;font-size:13.5px;color:#a3a3a3;letter-spacing:-0.1px">Master - Company Payroll Reminders</div>
  <svg class="a" style="left:510px;top:18px" width="14" height="14" viewBox="0 0 14 14"><circle cx="4.5" cy="7.5" r="2" stroke="#a8a8a8" stroke-width="1" fill="none"/><path d="M1 13Q4.5 8.5 8 13" stroke="#a8a8a8" stroke-width="1" fill="none"/><circle cx="9.5" cy="3" r="2" stroke="#a8a8a8" stroke-width="1" fill="none"/><path d="M7 7Q10 4.5 13 8" stroke="#a8a8a8" stroke-width="1" fill="none"/></svg>
  <div class="a" style="left:533px;top:24px;width:3px;height:3px;background:#a8a8a8"></div>
  <div class="a nw" style="transform:scaleX(0.7837);transform-origin:0 50%;left:542px;top:17px;font-size:13.5px;color:#a3a3a3">Saved</div>
  <svg class="a" style="left:577px;top:21px" width="11" height="7" viewBox="0 0 11 7"><path d="M0.5 0.5L5.5 5.5L10.5 0.5" stroke="#a8a8a8" stroke-width="1" fill="none"/></svg>
  <svg class="a" style="left:727px;top:17px" width="15" height="16" viewBox="0 0 15 16"><circle cx="9.5" cy="5.5" r="4.8" stroke="#b0b0b0" stroke-width="1" fill="none"/><path d="M6 9L0.8 14.8" stroke="#b0b0b0" stroke-width="1.2"/></svg>
  <svg class="a" style="left:779px;top:13px" width="24" height="24" viewBox="0 0 24 24"><defs><clipPath id="avc"><circle cx="12" cy="12" r="12"/></clipPath></defs><g clip-path="url(#avc)"><rect width="24" height="24" fill="#eceef0"/><path d="M5 21Q3 14 6 7Q8 2 12.5 2Q17.5 2 19 7Q21 14 19 21Z" fill="#b48a52"/><path d="M7 20Q6 13 8 8Q10 4 13 4.5Q16 5 17 9Q18 14 17 20Z" fill="#d2b07a"/><ellipse cx="12.3" cy="11" rx="3.6" ry="4.6" fill="#ecc7a8"/><path d="M10.5 14.5H14V18H10.5Z" fill="#e3b998"/><path d="M2 26Q3 18 10 17.5L12.2 20L14.5 17.5Q21 18 22 26Z" fill="#15151c"/></g></svg>
  <div class="a" style="left:834px;top:24px;width:11px;height:1px;background:#b8b8b8"></div>
  <div class="a" style="left:882px;top:20px;width:10px;height:10px;border:1px solid #b8b8b8;border-radius:1px"></div>
  <svg class="a" style="left:929px;top:19px" width="12" height="12" viewBox="0 0 12 12"><path d="M1 1L11 11M11 1L1 11" stroke="#b8b8b8" stroke-width="1"/></svg>

  <!-- ribbon tabs -->
  <div class="a nw rt" style="transform:scaleX(0.8569);transform-origin:0 50%;left:23px;top:56px">File</div>
  <div class="a nw rt" style="transform:scaleX(1.0013);transform-origin:0 50%;left:68px;top:56px;color:#111">Home</div>
  <div class="a" style="left:68px;top:72px;width:38px;height:3px;background:#107c41;border-radius:2px"></div>
  <div class="a nw rt" style="transform:scaleX(0.9296);transform-origin:0 50%;left:125px;top:56px">Insert</div>
  <div class="a nw rt" style="transform:scaleX(0.9293);transform-origin:0 50%;left:178px;top:56px">Draw</div>
  <div class="a nw rt" style="transform:scaleX(0.9158);transform-origin:0 50%;left:230px;top:56px">Page Layout</div>
  <div class="a nw rt" style="transform:scaleX(0.9036);transform-origin:0 50%;left:323px;top:56px">Formulas</div>
  <div class="a nw rt" style="transform:scaleX(0.9251);transform-origin:0 50%;left:397px;top:56px">Data</div>
  <div class="a nw rt" style="transform:scaleX(0.9048);transform-origin:0 50%;left:445px;top:56px">Review</div>
  <div class="a nw rt" style="transform:scaleX(0.9090);transform-origin:0 50%;left:505px;top:56px">View</div>
  <div class="a nw rt" style="transform:scaleX(0.9471);transform-origin:0 50%;left:554px;top:56px">Automate</div>
  <div class="a nw rt" style="transform:scaleX(0.9536);transform-origin:0 50%;left:631px;top:56px">Developer</div>
  <div class="a nw rt" style="transform:scaleX(0.8717);transform-origin:0 50%;left:710px;top:56px">MACRO</div>
  <div class="a nw rt" style="transform:scaleX(0.9505);transform-origin:0 50%;left:775px;top:56px">Help</div>
  <div class="a nw rt" style="transform:scaleX(0.9671);transform-origin:0 50%;left:822px;top:56px">Acrobat</div>
  <div class="a" style="left:883px;top:52px;width:24px;height:24px;background:#fff;border:1px solid #8a8a8a;border-radius:4px"></div>
  <svg class="a" style="left:889px;top:58px" width="12" height="12" viewBox="0 0 12 12"><path d="M0.7 0.7H11.3V8.3H5L2.5 10.8V8.3H0.7Z" stroke="#222" stroke-width="1" fill="none"/></svg>
  <div class="a" style="left:915px;top:52px;width:32px;height:24px;background:#16803c;border-radius:4px"></div>
  <svg class="a" style="left:919px;top:57px" width="24" height="14" viewBox="0 0 24 14"><path d="M1 5V13H11V10" stroke="#fff" stroke-width="1" fill="none"/><path d="M3.5 10Q4 4 10 4V1.5L14 5.5L10 9V6.5Q6 6.5 3.5 10Z" stroke="#fff" stroke-width="1" fill="none"/><path d="M17 5L19.5 7.5L22 5" stroke="#fff" stroke-width="1.3" fill="none"/></svg>

  <!-- ribbon panel -->
  <div class="a" style="left:9px;top:79px;width:942px;height:131px;background:#fff;border-radius:8px;box-shadow:0 1px 2px rgba(0,0,0,0.2)"></div>
  <div class="a" style="left:9px;top:178px;width:942px;height:32px;background:#fdf6d9;border-radius:0 0 8px 8px;border-top:1px solid #ece6c8"></div>

  <!-- ribbon content -->
  <svg class="a" style="left:35px;top:85px" width="30" height="33" viewBox="0 0 30 33"><rect x="1.5" y="4.5" width="20" height="22" fill="#fde9c4" stroke="#e8850c" stroke-width="1.3"/><path d="M5.5 7V3H9Q10 0.5 11.5 0.5Q13 0.5 14 3H17.5V7Z" fill="#fff" stroke="#777" stroke-width="1"/><rect x="13.5" y="12.5" width="13" height="17" fill="#fff" stroke="#333" stroke-width="1.2"/></svg>
  <div class="a nw rl" style="transform:scaleX(0.8824);transform-origin:0 50%;left:21px;top:119px">Clipboard</div>
  <svg class="a" style="left:43px;top:140px" width="8" height="5" viewBox="0 0 8 5"><path d="M1 1L4 4L7 1" stroke="#333" stroke-width="1.2" fill="none"/></svg>
  <div class="a" style="left:83px;top:84px;width:1px;height:88px;background:#d6d6d6"></div>
  <svg class="a" style="left:101px;top:86px" width="18" height="22" viewBox="0 0 18 22"><path d="M1 21.5L9 0.8L17 21.5M4.2 13.8H13.8" stroke="#333" stroke-width="1.2" fill="none"/></svg>
  <div class="a" style="left:94px;top:108px;width:32px;height:7px;background:#222"></div>
  <div class="a nw rl" style="transform:scaleX(0.8884);transform-origin:0 50%;left:98px;top:119px">Font</div>
  <svg class="a" style="left:106px;top:140px" width="8" height="5" viewBox="0 0 8 5"><path d="M1 1L4 4L7 1" stroke="#333" stroke-width="1.2" fill="none"/></svg>
  <div class="a" style="left:137px;top:84px;width:1px;height:88px;background:#d6d6d6"></div>
  <svg class="a" style="left:160px;top:88px" width="29" height="23" viewBox="0 0 29 23"><path d="M0 1.5H28M4 6.5H24M0 11.5H28M4 16.5H24M0 21.5H28" stroke="#333" stroke-width="1"/></svg>
  <div class="a nw rl" style="transform:scaleX(0.9326);transform-origin:0 50%;left:146px;top:119px">Alignment</div>
  <svg class="a" style="left:170px;top:140px" width="8" height="5" viewBox="0 0 8 5"><path d="M1 1L4 4L7 1" stroke="#333" stroke-width="1.2" fill="none"/></svg>
  <div class="a" style="left:211px;top:84px;width:1px;height:88px;background:#d6d6d6"></div>
  <svg class="a" style="left:229px;top:87px" width="27" height="26" viewBox="0 0 27 26"><circle cx="6" cy="6" r="4.2" stroke="#333" stroke-width="1.2" fill="none"/><circle cx="20.5" cy="19.5" r="4.2" stroke="#333" stroke-width="1.2" fill="none"/><path d="M20 1L5.5 25" stroke="#333" stroke-width="1.2"/></svg>
  <div class="a nw rl" style="transform:scaleX(0.9164);transform-origin:0 50%;left:220px;top:119px">Number</div>
  <svg class="a" style="left:238px;top:140px" width="8" height="5" viewBox="0 0 8 5"><path d="M1 1L4 4L7 1" stroke="#333" stroke-width="1.2" fill="none"/></svg>
  <div class="a" style="left:274px;top:84px;width:1px;height:88px;background:#d6d6d6"></div>
  <svg class="a" style="left:286px;top:88px" width="17" height="15" viewBox="0 0 17 15"><rect x="0.5" y="0.5" width="16" height="14" fill="#fff" stroke="#555"/><path d="M0.5 5H16.5M0.5 9.5H16.5M6 0.5V14.5M11 0.5V14.5" stroke="#555" stroke-width="0.8"/><rect x="1" y="1" width="5" height="4" fill="#e04444"/><rect x="11" y="5" width="5.5" height="4.5" fill="#e04444"/><rect x="6" y="10" width="5" height="4" fill="#e04444"/></svg>
  <div class="a nw rl" style="transform:scaleX(0.9129);transform-origin:0 50%;left:306px;top:87px">Conditional Formatting</div>
  <svg class="a" style="left:433px;top:93px" width="8" height="5" viewBox="0 0 8 5"><path d="M1 1L4 4L7 1" stroke="#333" stroke-width="1.2" fill="none"/></svg>
  <svg class="a" style="left:286px;top:114px" width="17" height="16" viewBox="0 0 17 16"><rect x="0.5" y="0.5" width="16" height="14" fill="#fff" stroke="#555"/><path d="M0.5 5H16.5M0.5 9.5H16.5M6 0.5V14.5M11 0.5V14.5" stroke="#555" stroke-width="0.8"/><path d="M4 15L15 4L16 5L5 16Z" fill="#3b7dd8"/></svg>
  <div class="a nw rl" style="transform:scaleX(0.8597);transform-origin:0 50%;left:306px;top:113px">Format as Table</div>
  <svg class="a" style="left:392px;top:119px" width="8" height="5" viewBox="0 0 8 5"><path d="M1 1L4 4L7 1" stroke="#333" stroke-width="1.2" fill="none"/></svg>
  <svg class="a" style="left:286px;top:140px" width="17" height="16" viewBox="0 0 17 16"><rect x="0.5" y="0.5" width="16" height="14" fill="#fff" stroke="#555"/><path d="M0.5 4H16.5" stroke="#555" stroke-width="0.8"/><path d="M4 15L15 4L16 5L5 16Z" fill="#3b7dd8"/></svg>
  <div class="a nw rl" style="transform:scaleX(0.8310);transform-origin:0 50%;left:306px;top:139px">Cell Styles</div>
  <svg class="a" style="left:362px;top:145px" width="8" height="5" viewBox="0 0 8 5"><path d="M1 1L4 4L7 1" stroke="#333" stroke-width="1.2" fill="none"/></svg>
  <div class="a nw rl" style="transform:scaleX(0.7616);transform-origin:0 50%;left:351px;top:161px">Styles</div>
  <div class="a" style="left:458px;top:84px;width:1px;height:88px;background:#d6d6d6"></div>
  <svg class="a" style="left:471px;top:84px" width="29" height="28" viewBox="0 0 29 28"><path d="M7 1H21M7 0V2M21 0V2" stroke="#2b7cd3" stroke-width="1"/><rect x="0.7" y="5.7" width="27.6" height="21.6" fill="#fff" stroke="#444" stroke-width="1.2"/><path d="M0.7 12.5H28.3M0.7 19.8H28.3M7.5 5.7V27.3M21.5 5.7V27.3" stroke="#444" stroke-width="1.2"/><rect x="8" y="13" width="13" height="6.5" fill="#69a7e8"/></svg>
  <div class="a nw rl" style="transform:scaleX(0.8329);transform-origin:0 50%;left:472px;top:119px">Cells</div>
  <svg class="a" style="left:481px;top:140px" width="8" height="5" viewBox="0 0 8 5"><path d="M1 1L4 4L7 1" stroke="#333" stroke-width="1.2" fill="none"/></svg>
  <div class="a" style="left:512px;top:84px;width:1px;height:88px;background:#d6d6d6"></div>
  <svg class="a" style="left:524px;top:85px" width="31" height="31" viewBox="0 0 31 31"><circle cx="19" cy="11.5" r="10" stroke="#333" stroke-width="1.3" fill="none"/><path d="M12 18.5L1 29.5" stroke="#333" stroke-width="1.4"/></svg>
  <div class="a nw rl" style="transform:scaleX(0.8963);transform-origin:0 50%;left:521px;top:119px">Editing</div>
  <svg class="a" style="left:535px;top:140px" width="8" height="5" viewBox="0 0 8 5"><path d="M1 1L4 4L7 1" stroke="#333" stroke-width="1.2" fill="none"/></svg>
  <div class="a" style="left:567px;top:84px;width:1px;height:88px;background:#d6d6d6"></div>
  <svg class="a" style="left:593px;top:86px" width="30" height="31" viewBox="0 0 30 31"><rect x="0.7" y="3.7" width="21" height="26.6" rx="1" fill="#e8e8e8" stroke="#c8c8c8"/><path d="M5 24L18 11L21 14L8 27Z" fill="#d6d6d6" stroke="#bdbdbd"/><path d="M15 8L22 1L29 8L22 15Z" fill="#e0e0e0" stroke="#bdbdbd"/></svg>
  <div class="a nw rl" style="transform:scaleX(0.8720);transform-origin:0 50%;left:578px;top:121px;color:#b0b0b0">Sensitivity</div>
  <svg class="a" style="left:600px;top:142px" width="8" height="5" viewBox="0 0 8 5"><path d="M0.5 0.5L4 4L7.5 0.5" stroke="#b8b8b8" stroke-width="1" fill="none"/></svg>
  <div class="a nw rl" style="transform:scaleX(0.8226);transform-origin:0 50%;left:579px;top:161px">Sensitivity</div>
  <div class="a" style="left:641px;top:84px;width:1px;height:88px;background:#d6d6d6"></div>
  <svg class="a" style="left:659px;top:88px" width="29" height="29" viewBox="0 0 29 29"><rect x="0.8" y="0.8" width="27.4" height="27.4" stroke="#d04a1c" stroke-width="1.6" fill="#fff"/><rect x="4" y="4" width="9" height="9" stroke="#d04a1c" stroke-width="1.4" fill="none"/><rect x="16" y="4" width="9" height="9" stroke="#d04a1c" stroke-width="1.4" fill="none"/><rect x="4" y="16" width="9" height="9" stroke="#d04a1c" stroke-width="1.4" fill="none"/><rect x="16" y="16" width="9" height="9" stroke="#d04a1c" stroke-width="1.4" fill="none"/></svg>
  <div class="a nw rl" style="transform:scaleX(0.9174);transform-origin:0 50%;left:652px;top:121px">Add-ins</div>
  <div class="a nw rl" style="transform:scaleX(0.9174);transform-origin:0 50%;left:652px;top:161px">Add-ins</div>
  <div class="a" style="left:704px;top:84px;width:1px;height:88px;background:#d6d6d6"></div>
  <svg class="a" style="left:718px;top:87px" width="15" height="15" viewBox="0 0 15 15"><defs><linearGradient id="cp1" x1="0" y1="0" x2="1" y2="1"><stop offset="0" stop-color="#0fb5e8"/><stop offset="1" stop-color="#2a63e6"/></linearGradient><linearGradient id="cp2" x1="0" y1="0" x2="1" y2="1"><stop offset="0" stop-color="#e84fbf"/><stop offset="0.6" stop-color="#f26b4a"/><stop offset="1" stop-color="#f7b52c"/></linearGradient></defs><path d="M4.5 0.5H9.5Q11 0.5 10.6 2L8 11Q7.6 12.5 6 12.5H2Q0.5 12.5 0.9 11L3.2 2Q3.6 0.5 4.5 0.5Z" fill="url(#cp1)"/><path d="M9 2.5H13Q14.6 2.5 14.2 4L11.8 13Q11.4 14.5 10 14.5H5.5Q4 14.5 4.4 13L6.8 4Q7.2 2.5 9 2.5Z" fill="url(#cp2)" opacity="0.92"/></svg>
  <div class="a nw rl" style="transform:scaleX(0.9279);transform-origin:0 50%;left:737px;top:88px">Copilot</div>
  <div class="a" style="left:792px;top:84px;width:1px;height:88px;background:#d6d6d6"></div>
  <svg class="a" style="left:818px;top:87px" width="28" height="30" viewBox="0 0 28 30"><path d="M1 2A1.5 1.5 0 0 1 2.5 0.7H14L20 6.7V14" stroke="#2b5fc9" stroke-width="1.3" fill="none"/><path d="M14 22H2.5A1.5 1.5 0 0 1 1 20.5V2" stroke="#2b5fc9" stroke-width="1.3" fill="none"/><path d="M6 15Q8 9 10 5Q11 9 14.5 13Q10 12 6 15Z" stroke="#2b5fc9" stroke-width="1" fill="none"/><rect x="17" y="17" width="6" height="10" rx="3" transform="rotate(40 20 22)" stroke="#2b5fc9" stroke-width="1.3" fill="#fff"/><rect x="20" y="13" width="6" height="10" rx="3" transform="rotate(40 23 18)" stroke="#2b5fc9" stroke-width="1.3" fill="none"/></svg>
  <div class="a nw rl" style="transform:scaleX(0.8964);transform-origin:0 50%;left:810px;top:119px">Adobe</div>
  <div class="a nw rl" style="transform:scaleX(0.9241);transform-origin:0 50%;left:801px;top:135px">Acrobat</div>
  <svg class="a" style="left:848px;top:141px" width="8" height="5" viewBox="0 0 8 5"><path d="M1 1L4 4L7 1" stroke="#333" stroke-width="1.2" fill="none"/></svg>
  <div class="a" style="left:863px;top:84px;width:1px;height:88px;background:#d6d6d6"></div>
  <div class="a" style="left:890px;top:88px;width:26px;height:26px;border-radius:13px;background:#1db34a"></div>
  <div class="a" style="left:895px;top:95px;width:12px;height:12px;border-radius:6px;border:3px solid #fff"></div>
  <div class="a nw rl" style="left:874px;top:121px">Sprea</div>
  <div class="a nw rl" style="left:895px;top:137px">S</div>
  <div class="a nw rl" style="left:870px;top:161px">Sprea</div>
  <div class="a" style="left:900px;top:79px;width:23px;height:99px;background:#fff;border:1px solid #777"></div>
  <svg class="a" style="left:908px;top:125px" width="5" height="8" viewBox="0 0 5 8"><path d="M0.5 0.5L4 4L0.5 7.5" stroke="#333" stroke-width="1" fill="none"/></svg>
  <svg class="a" style="left:931px;top:162px" width="11" height="7" viewBox="0 0 11 7"><path d="M0.5 0.5L5.5 5.5L10.5 0.5" stroke="#333" stroke-width="1.1" fill="none"/></svg>

  <!-- notification bar -->
  <svg class="a" style="left:20px;top:186px" width="17" height="17" viewBox="0 0 17 17"><circle cx="8.5" cy="8.5" r="7.7" stroke="#0f6cbd" stroke-width="1.2" fill="none"/><path d="M8.5 7V13" stroke="#0f6cbd" stroke-width="1.5"/><circle cx="8.5" cy="4.6" r="0.9" fill="#0f6cbd"/></svg>
  <div class="a nw" style="transform:scaleX(0.8256);transform-origin:0 50%;left:45px;top:187px;font-size:13.5px;color:#1a1a1a">SLOW WORKBOOK?</div>
  <div class="a nw" style="transform:scaleX(0.8915);transform-origin:0 50%;left:164px;top:187px;font-size:13.5px;color:#1a1a1a">97% of your workbook has unused formatting and metadata that can be optimized to improve performance.</div>
  <div class="a" style="left:746px;top:182px;width:123px;height:25px;background:#fff;border:1px solid #8a8a8a;border-radius:4px"></div>
  <div class="a nw" style="transform:scaleX(0.8633);transform-origin:0 50%;left:754px;top:186px;font-size:13.5px;color:#1a1a1a">Check Performance</div>
  <svg class="a" style="left:929px;top:189px" width="11" height="11" viewBox="0 0 11 11"><path d="M0.5 0.5L10.5 10.5M10.5 0.5L0.5 10.5" stroke="#333" stroke-width="1.2"/></svg>

  <!-- formula bar -->
  <div class="a" style="left:9px;top:218px;width:102px;height:25px;background:#fff;border:1px solid #e0e0e0;border-radius:4px;box-shadow:0 1px 1px rgba(0,0,0,0.08)"></div>
  <div class="a nw" style="transform:scaleX(0.9137);transform-origin:0 50%;left:16px;top:222px;font-size:13.5px;color:#222">M47</div>
  <svg class="a" style="left:94px;top:227px" width="11" height="7" viewBox="0 0 11 7"><path d="M0.5 0.5L5.5 5.5L10.5 0.5" stroke="#333" stroke-width="1.2" fill="none"/></svg>
  <svg class="a" style="left:119px;top:222px" width="4" height="16" viewBox="0 0 4 16"><circle cx="2" cy="3" r="1.3" fill="#333"/><circle cx="2" cy="8" r="1.3" fill="#333"/><circle cx="2" cy="13" r="1.3" fill="#333"/></svg>
  <div class="a" style="left:132px;top:218px;width:85px;height:25px;background:#fff;border:1px solid #e0e0e0;border-radius:4px;box-shadow:0 1px 1px rgba(0,0,0,0.08)"></div>
  <svg class="a" style="left:137px;top:224px" width="13" height="13" viewBox="0 0 13 13"><path d="M1 1L12 12M12 1L1 12" stroke="#b5b5b5" stroke-width="1.1"/></svg>
  <svg class="a" style="left:159px;top:225px" width="18" height="12" viewBox="0 0 18 12"><path d="M1 6L6 11L17 1" stroke="#b5b5b5" stroke-width="1.1" fill="none"/></svg>
  <div class="a nw" style="left:185px;top:219px;font-size:17px;font-style:italic;font-family:'Liberation Serif',serif;color:#222">fx</div>
  <svg class="a" style="left:207px;top:228px" width="8" height="5" viewBox="0 0 8 5"><path d="M1 1L4 4L7 1" stroke="#333" stroke-width="1.2" fill="none"/></svg>
  <div class="a" style="left:222px;top:218px;width:729px;height:25px;background:#fff;border:1px solid #e0e0e0;border-radius:4px;box-shadow:0 1px 1px rgba(0,0,0,0.08)"></div>
  <svg class="a" style="left:936px;top:227px" width="11" height="7" viewBox="0 0 11 7"><path d="M0.5 0.5L5.5 5.5L10.5 0.5" stroke="#333" stroke-width="1.2" fill="none"/></svg>

  <!-- ======= GRID ======= -->
  <div class="a" style="left:27px;top:271px;width:910px;height:705px;background:#fff"></div>
  <div class="a" style="left:1px;top:271px;width:25px;height:705px;background:#efefef"></div>
  
  <div class="a" style="left:26px;top:248px;width:1px;height:728px;background:#b8b8b8"></div>
  <div class="a" style="left:1px;top:269px;width:936px;height:1px;background:#b0b0b0"></div>
  <svg class="a" style="left:12px;top:254px" width="12" height="12" viewBox="0 0 12 12"><path d="M12 0V12H0Z" fill="#d8d8d8"/></svg>
<div class="a" style="left:302px;top:251px;width:1px;height:18px;background:#d6d6d6"></div><div class="a" style="left:369px;top:251px;width:1px;height:18px;background:#d6d6d6"></div><div class="a" style="left:433px;top:251px;width:1px;height:18px;background:#d6d6d6"></div><div class="a" style="left:497px;top:251px;width:1px;height:18px;background:#d6d6d6"></div><div class="a" style="left:561px;top:251px;width:1px;height:18px;background:#d6d6d6"></div><div class="a" style="left:625px;top:251px;width:1px;height:18px;background:#d6d6d6"></div><div class="a" style="left:690px;top:251px;width:1px;height:18px;background:#d6d6d6"></div><div class="a" style="left:756px;top:251px;width:1px;height:18px;background:#d6d6d6"></div><div class="a" style="left:821px;top:251px;width:1px;height:18px;background:#d6d6d6"></div><div class="a" style="left:885px;top:251px;width:1px;height:18px;background:#d6d6d6"></div><div class="a nw ch" style="margin-top:1px;left:27px;top:251px;width:275px;text-align:center">E</div><div class="a nw ch" style="margin-top:1px;left:302px;top:251px;width:67px;text-align:center">F</div><div class="a nw ch" style="margin-top:1px;left:369px;top:251px;width:64px;text-align:center">G</div><div class="a nw ch" style="margin-top:1px;left:433px;top:251px;width:64px;text-align:center">H</div><div class="a nw ch" style="margin-top:1px;left:497px;top:251px;width:64px;text-align:center">I</div><div class="a nw ch" style="margin-top:1px;left:561px;top:251px;width:64px;text-align:center">J</div><div class="a nw ch" style="margin-top:1px;left:625px;top:251px;width:65px;text-align:center">K</div><div class="a nw ch" style="margin-top:1px;left:690px;top:251px;width:66px;text-align:center">L</div><div class="a nw ch" style="margin-top:1px;left:756px;top:251px;width:65px;text-align:center">M</div><div class="a nw ch" style="margin-top:1px;left:821px;top:251px;width:64px;text-align:center">N</div><div class="a nw ch" style="margin-top:1px;left:891px;top:251px;width:52px;text-align:center">O</div><div class="a nw rh" style="left:1px;top:273px;width:25px;text-align:center;color:#444">1</div><div class="a" style="left:1px;top:290px;width:25px;height:1px;background:#dcdcdc"></div><div class="a nw rh" style="left:1px;top:293px;width:25px;text-align:center;color:#444">2</div><div class="a" style="left:1px;top:310px;width:25px;height:1px;background:#dcdcdc"></div><div class="a nw rh" style="left:1px;top:313px;width:25px;text-align:center;color:#444">3</div><div class="a" style="left:1px;top:330px;width:25px;height:1px;background:#dcdcdc"></div><div class="a nw rh" style="left:1px;top:333px;width:25px;text-align:center;color:#444">4</div><div class="a" style="left:1px;top:350px;width:25px;height:1px;background:#dcdcdc"></div><div class="a nw rh" style="left:1px;top:354px;width:25px;text-align:center;color:#444">5</div><div class="a" style="left:1px;top:371px;width:25px;height:1px;background:#dcdcdc"></div><div class="a nw rh" style="left:1px;top:375px;width:25px;text-align:center;color:#0000ff">44</div><div class="a" style="left:1px;top:392px;width:25px;height:1px;background:#dcdcdc"></div><div class="a nw rh" style="left:1px;top:395px;width:25px;text-align:center;color:#0000ff">45</div><div class="a" style="left:1px;top:412px;width:25px;height:1px;background:#dcdcdc"></div><div class="a nw rh" style="left:1px;top:415px;width:25px;text-align:center;color:#0000ff">46</div><div class="a" style="left:1px;top:432px;width:25px;height:1px;background:#dcdcdc"></div><div class="a nw rh" style="left:1px;top:455px;width:25px;text-align:center;color:#0000ff">47</div><div class="a" style="left:1px;top:472px;width:25px;height:1px;background:#dcdcdc"></div><div class="a nw rh" style="left:1px;top:475px;width:25px;text-align:center;color:#0000ff">48</div><div class="a" style="left:1px;top:492px;width:25px;height:1px;background:#dcdcdc"></div><div class="a nw rh" style="left:1px;top:495px;width:25px;text-align:center;color:#444">49</div><div class="a" style="left:1px;top:512px;width:25px;height:1px;background:#dcdcdc"></div><div class="a nw rh" style="left:1px;top:535px;width:25px;text-align:center;color:#444">50</div><div class="a" style="left:1px;top:552px;width:25px;height:1px;background:#dcdcdc"></div><div class="a nw rh" style="left:1px;top:575px;width:25px;text-align:center;color:#444">51</div><div class="a" style="left:1px;top:592px;width:25px;height:1px;background:#dcdcdc"></div><div class="a nw rh" style="left:1px;top:595px;width:25px;text-align:center;color:#444">52</div><div class="a" style="left:1px;top:612px;width:25px;height:1px;background:#dcdcdc"></div><div class="a nw rh" style="left:1px;top:615px;width:25px;text-align:center;color:#444">53</div><div class="a" style="left:1px;top:632px;width:25px;height:1px;background:#dcdcdc"></div><div class="a nw rh" style="left:1px;top:635px;width:25px;text-align:center;color:#444">54</div><div class="a" style="left:1px;top:652px;width:25px;height:1px;background:#dcdcdc"></div><div class="a nw rh" style="left:1px;top:655px;width:25px;text-align:center;color:#444">55</div><div class="a" style="left:1px;top:672px;width:25px;height:1px;background:#dcdcdc"></div><div class="a nw rh" style="left:1px;top:675px;width:25px;text-align:center;color:#444">56</div><div class="a" style="left:1px;top:692px;width:25px;height:1px;background:#dcdcdc"></div><div class="a nw rh" style="left:1px;top:695px;width:25px;text-align:center;color:#444">57</div><div class="a" style="left:1px;top:712px;width:25px;height:1px;background:#dcdcdc"></div><div class="a nw rh" style="left:1px;top:715px;width:25px;text-align:center;color:#444">58</div><div class="a" style="left:1px;top:732px;width:25px;height:1px;background:#dcdcdc"></div><div class="a nw rh" style="left:1px;top:735px;width:25px;text-align:center;color:#444">59</div><div class="a" style="left:1px;top:752px;width:25px;height:1px;background:#dcdcdc"></div><div class="a nw rh" style="left:1px;top:755px;width:25px;text-align:center;color:#444">60</div><div class="a" style="left:1px;top:772px;width:25px;height:1px;background:#dcdcdc"></div><div class="a nw rh" style="left:1px;top:775px;width:25px;text-align:center;color:#444">61</div><div class="a" style="left:1px;top:792px;width:25px;height:1px;background:#dcdcdc"></div><div class="a nw rh" style="left:1px;top:795px;width:25px;text-align:center;color:#444">62</div><div class="a" style="left:1px;top:812px;width:25px;height:1px;background:#dcdcdc"></div><div class="a nw rh" style="left:1px;top:815px;width:25px;text-align:center;color:#444">63</div><div class="a" style="left:1px;top:832px;width:25px;height:1px;background:#dcdcdc"></div><div class="a nw rh" style="left:1px;top:835px;width:25px;text-align:center;color:#444">64</div><div class="a" style="left:1px;top:852px;width:25px;height:1px;background:#dcdcdc"></div><div class="a nw rh" style="left:1px;top:855px;width:25px;text-align:center;color:#444">65</div><div class="a" style="left:1px;top:872px;width:25px;height:1px;background:#dcdcdc"></div><div class="a nw rh" style="left:1px;top:875px;width:25px;text-align:center;color:#444">66</div><div class="a" style="left:1px;top:892px;width:25px;height:1px;background:#dcdcdc"></div><div class="a nw rh" style="left:1px;top:895px;width:25px;text-align:center;color:#444">67</div><div class="a" style="left:1px;top:912px;width:25px;height:1px;background:#dcdcdc"></div><div class="a nw rh" style="left:1px;top:915px;width:25px;text-align:center;color:#444">68</div><div class="a" style="left:1px;top:932px;width:25px;height:1px;background:#dcdcdc"></div><div class="a nw rh" style="left:1px;top:935px;width:25px;text-align:center;color:#444">69</div><div class="a" style="left:1px;top:952px;width:25px;height:1px;background:#dcdcdc"></div><div class="a nw rh" style="left:1px;top:955px;width:25px;text-align:center;color:#444">70</div><div class="a" style="left:1px;top:972px;width:25px;height:1px;background:#dcdcdc"></div><div class="a" style="left:1px;top:372px;width:936px;height:1px;background:#7a7a7a"></div><div class="a" style="left:27px;top:373px;width:275px;height:19px;background:#f2f2f2"></div><div class="a" style="left:27px;top:393px;width:275px;height:19px;background:#f2f2f2"></div><div class="a" style="left:27px;top:413px;width:275px;height:19px;background:#f2f2f2"></div><div class="a" style="left:27px;top:433px;width:275px;height:39px;background:#f2f2f2"></div><div class="a" style="left:27px;top:473px;width:275px;height:19px;background:#f2f2f2"></div><div class="a" style="left:27px;top:493px;width:275px;height:19px;background:#f2f2f2"></div><div class="a" style="left:27px;top:513px;width:275px;height:39px;background:#f2f2f2"></div><div class="a" style="left:27px;top:553px;width:275px;height:39px;background:#f2f2f2"></div><div class="a" style="left:27px;top:593px;width:275px;height:19px;background:#f2f2f2"></div><div class="a" style="left:27px;top:613px;width:275px;height:19px;background:#f2f2f2"></div><div class="a" style="left:27px;top:633px;width:275px;height:19px;background:#f2f2f2"></div><div class="a" style="left:27px;top:653px;width:275px;height:19px;background:#f2f2f2"></div><div class="a" style="left:27px;top:673px;width:275px;height:19px;background:#f2f2f2"></div><div class="a" style="left:27px;top:693px;width:275px;height:19px;background:#f2f2f2"></div><div class="a" style="left:27px;top:713px;width:275px;height:19px;background:#f2f2f2"></div><div class="a" style="left:27px;top:733px;width:275px;height:19px;background:#f2f2f2"></div><div class="a" style="left:27px;top:753px;width:275px;height:19px;background:#f2f2f2"></div><div class="a" style="left:27px;top:773px;width:275px;height:19px;background:#f2f2f2"></div><div class="a" style="left:27px;top:793px;width:275px;height:19px;background:#f2f2f2"></div><div class="a" style="left:27px;top:813px;width:275px;height:19px;background:#f2f2f2"></div><div class="a" style="left:27px;top:833px;width:275px;height:19px;background:#f2f2f2"></div><div class="a" style="left:27px;top:853px;width:275px;height:19px;background:#f2f2f2"></div><div class="a" style="left:27px;top:873px;width:275px;height:19px;background:#f2f2f2"></div><div class="a" style="left:27px;top:893px;width:275px;height:19px;background:#f2f2f2"></div><div class="a" style="left:27px;top:913px;width:275px;height:19px;background:#f2f2f2"></div><div class="a" style="left:27px;top:933px;width:275px;height:19px;background:#f2f2f2"></div><div class="a" style="left:27px;top:953px;width:275px;height:19px;background:#f2f2f2"></div>
  <div class="a" style="left:27px;top:351px;width:275px;height:21px;background:#000"></div>
  <div class="a nw" style="transform:scaleX(0.9637);transform-origin:0 50%;left:29px;top:354px;font-size:14px;font-weight:bold;color:#fff">Screenshots</div>
  <div class="a" style="left:285px;top:352px;width:17px;height:19px;background:#f0f0f0;border:1px solid #c8c8c8"></div>
  <div class="a" style="left:289px;top:360px;width:0;height:0;border-left:4.5px solid transparent;border-right:4.5px solid transparent;border-top:5px solid #666"></div>
  <div class="a nw" style="left:29px;top:476px;font-size:13.5px;color:#111">Lef</div>
<div class="a" style="left:47px;top:397px;width:406px;height:531px;background:#e9e9e9;overflow:hidden"><div class="a" style="left:5px;top:9px;width:401px;height:1.6px;background:#111"></div><div class="a" style="left:5px;top:20px;width:410px;height:40px;background:#fff;border:1px solid #c8c8c8;border-right:none"></div><div class="a" style="left:34px;top:27px"><svg width="25" height="25" viewBox="0 0 24 24"><path fill="#7b1fa2" d="M19.14 12.94c.04-.3.06-.61.06-.94 0-.32-.02-.64-.07-.94l2.03-1.58a.49.49 0 0 0 .12-.61l-1.92-3.32a.488.488 0 0 0-.59-.22l-2.39.96c-.5-.38-1.03-.7-1.62-.94l-.36-2.54a.484.484 0 0 0-.48-.41h-3.84c-.24 0-.43.17-.47.41l-.36 2.54c-.59.24-1.13.57-1.62.94l-2.39-.96c-.22-.08-.47 0-.59.22L2.74 8.87c-.12.21-.08.47.12.61l2.03 1.58c-.05.3-.09.63-.09.94s.02.64.07.94l-2.03 1.58a.49.49 0 0 0-.12.61l1.92 3.32c.12.22.37.29.59.22l2.39-.96c.5.38 1.03.7 1.62.94l.36 2.54c.05.24.24.41.48.41h3.84c.24 0 .44-.17.47-.41l.36-2.54c.59-.24 1.13-.56 1.62-.94l2.39.96c.22.08.47 0 .59-.22l1.92-3.32c.12-.22.07-.47-.12-.61l-2.01-1.58zM12 15.6c-1.98 0-3.6-1.62-3.6-3.6s1.62-3.6 3.6-3.6 3.6 1.62 3.6 3.6-1.62 3.6-3.6 3.6z"/></svg></div><div class="a nw card" style="transform:scaleX(0.9673);transform-origin:0 50%;left:87px;top:30px">ACC - Accident Ins</div><div class="a nw cardv" style="transform:scaleX(0.9821);transform-origin:0 50%;left:360.5px;top:30px">6.39</div><div class="a" style="left:5px;top:72px;width:410px;height:40px;background:#fff;border:1px solid #c8c8c8;border-right:none"></div><div class="a" style="left:34px;top:79px"><svg width="25" height="25" viewBox="0 0 24 24"><path fill="#7b1fa2" d="M19.14 12.94c.04-.3.06-.61.06-.94 0-.32-.02-.64-.07-.94l2.03-1.58a.49.49 0 0 0 .12-.61l-1.92-3.32a.488.488 0 0 0-.59-.22l-2.39.96c-.5-.38-1.03-.7-1.62-.94l-.36-2.54a.484.484 0 0 0-.48-.41h-3.84c-.24 0-.43.17-.47.41l-.36 2.54c-.59.24-1.13.57-1.62.94l-2.39-.96c-.22-.08-.47 0-.59.22L2.74 8.87c-.12.21-.08.47.12.61l2.03 1.58c-.05.3-.09.63-.09.94s.02.64.07.94l-2.03 1.58a.49.49 0 0 0-.12.61l1.92 3.32c.12.22.37.29.59.22l2.39-.96c.5.38 1.03.7 1.62.94l.36 2.54c.05.24.24.41.48.41h3.84c.24 0 .44-.17.47-.41l.36-2.54c.59-.24 1.13-.56 1.62-.94l2.39.96c.22.08.47 0 .59-.22l1.92-3.32c.12-.22.07-.47-.12-.61l-2.01-1.58zM12 15.6c-1.98 0-3.6-1.62-3.6-3.6s1.62-3.6 3.6-3.6 3.6 1.62 3.6 3.6-1.62 3.6-3.6 3.6z"/></svg></div><div class="a nw card" style="transform:scaleX(0.9046);transform-origin:0 50%;left:87px;top:82px">CRE - CRITICAL ILL EE</div><div class="a nw cardv" style="transform:scaleX(0.8931);transform-origin:0 50%;left:355.0px;top:82px">44.19</div><div class="a" style="left:5px;top:124px;width:410px;height:40px;background:#fff;border:1px solid #c8c8c8;border-right:none"></div><div class="a" style="left:34px;top:131px"><svg width="25" height="25" viewBox="0 0 24 24"><path fill="#7b1fa2" d="M19.14 12.94c.04-.3.06-.61.06-.94 0-.32-.02-.64-.07-.94l2.03-1.58a.49.49 0 0 0 .12-.61l-1.92-3.32a.488.488 0 0 0-.59-.22l-2.39.96c-.5-.38-1.03-.7-1.62-.94l-.36-2.54a.484.484 0 0 0-.48-.41h-3.84c-.24 0-.43.17-.47.41l-.36 2.54c-.59.24-1.13.57-1.62.94l-2.39-.96c-.22-.08-.47 0-.59.22L2.74 8.87c-.12.21-.08.47.12.61l2.03 1.58c-.05.3-.09.63-.09.94s.02.64.07.94l-2.03 1.58a.49.49 0 0 0-.12.61l1.92 3.32c.12.22.37.29.59.22l2.39-.96c.5.38 1.03.7 1.62.94l.36 2.54c.05.24.24.41.48.41h3.84c.24 0 .44-.17.47-.41l.36-2.54c.59-.24 1.13-.56 1.62-.94l2.39.96c.22.08.47 0 .59-.22l1.92-3.32c.12-.22.07-.47-.12-.61l-2.01-1.58zM12 15.6c-1.98 0-3.6-1.62-3.6-3.6s1.62-3.6 3.6-3.6 3.6 1.62 3.6 3.6-1.62 3.6-3.6 3.6z"/></svg></div><div class="a nw card" style="transform:scaleX(0.9030);transform-origin:0 50%;left:87px;top:134px">DEN - DEN PRE TAX</div><div class="a nw cardv" style="transform:scaleX(0.8814);transform-origin:0 50%;left:355.5px;top:134px">22.41</div><div class="a" style="left:5px;top:176px;width:410px;height:40px;background:#fff;border:1px solid #c8c8c8;border-right:none"></div><div class="a" style="left:31px;top:183px"><svg width="25" height="25" viewBox="0 0 24 24"><path fill="#7b1fa2" d="M19.14 12.94c.04-.3.06-.61.06-.94 0-.32-.02-.64-.07-.94l2.03-1.58a.49.49 0 0 0 .12-.61l-1.92-3.32a.488.488 0 0 0-.59-.22l-2.39.96c-.5-.38-1.03-.7-1.62-.94l-.36-2.54a.484.484 0 0 0-.48-.41h-3.84c-.24 0-.43.17-.47.41l-.36 2.54c-.59.24-1.13.57-1.62.94l-2.39-.96c-.22-.08-.47 0-.59.22L2.74 8.87c-.12.21-.08.47.12.61l2.03 1.58c-.05.3-.09.63-.09.94s.02.64.07.94l-2.03 1.58a.49.49 0 0 0-.12.61l1.92 3.32c.12.22.37.29.59.22l2.39-.96c.5.38 1.03.7 1.62.94l.36 2.54c.05.24.24.41.48.41h3.84c.24 0 .44-.17.47-.41l.36-2.54c.59-.24 1.13-.56 1.62-.94l2.39.96c.22.08.47 0 .59-.22l1.92-3.32c.12-.22.07-.47-.12-.61l-2.01-1.58zM12 15.6c-1.98 0-3.6-1.62-3.6-3.6s1.62-3.6 3.6-3.6 3.6 1.62 3.6 3.6-1.62 3.6-3.6 3.6z"/></svg></div><div class="a nw card" style="transform:scaleX(0.8889);transform-origin:0 50%;left:83px;top:186px">FSA - FLEXIBLE SPENDI</div><div class="a nw cardv" style="transform:scaleX(0.9038);transform-origin:0 50%;left:335.5px;top:186px">130.77</div><div class="a" style="left:5px;top:228px;width:410px;height:40px;background:#fff;border:1px solid #c8c8c8;border-right:none"></div><div class="a" style="left:34px;top:235px"><svg width="25" height="25" viewBox="0 0 24 24"><path fill="#7b1fa2" d="M19.14 12.94c.04-.3.06-.61.06-.94 0-.32-.02-.64-.07-.94l2.03-1.58a.49.49 0 0 0 .12-.61l-1.92-3.32a.488.488 0 0 0-.59-.22l-2.39.96c-.5-.38-1.03-.7-1.62-.94l-.36-2.54a.484.484 0 0 0-.48-.41h-3.84c-.24 0-.43.17-.47.41l-.36 2.54c-.59.24-1.13.57-1.62.94l-2.39-.96c-.22-.08-.47 0-.59.22L2.74 8.87c-.12.21-.08.47.12.61l2.03 1.58c-.05.3-.09.63-.09.94s.02.64.07.94l-2.03 1.58a.49.49 0 0 0-.12.61l1.92 3.32c.12.22.37.29.59.22l2.39-.96c.5.38 1.03.7 1.62.94l.36 2.54c.05.24.24.41.48.41h3.84c.24 0 .44-.17.47-.41l.36-2.54c.59-.24 1.13-.56 1.62-.94l2.39.96c.22.08.47 0 .59-.22l1.92-3.32c.12-.22.07-.47-.12-.61l-2.01-1.58zM12 15.6c-1.98 0-3.6-1.62-3.6-3.6s1.62-3.6 3.6-3.6 3.6 1.62 3.6 3.6-1.62 3.6-3.6 3.6z"/></svg></div><div class="a nw card" style="transform:scaleX(0.9023);transform-origin:0 50%;left:87px;top:238px">LIF - LifeEE</div><div class="a nw cardv" style="transform:scaleX(0.8461);transform-origin:0 50%;left:357.0px;top:238px">17.42</div><div class="a" style="left:5px;top:280px;width:410px;height:40px;background:#fff;border:1px solid #c8c8c8;border-right:none"></div><div class="a" style="left:34px;top:287px"><svg width="25" height="25" viewBox="0 0 24 24"><path fill="#7b1fa2" d="M19.14 12.94c.04-.3.06-.61.06-.94 0-.32-.02-.64-.07-.94l2.03-1.58a.49.49 0 0 0 .12-.61l-1.92-3.32a.488.488 0 0 0-.59-.22l-2.39.96c-.5-.38-1.03-.7-1.62-.94l-.36-2.54a.484.484 0 0 0-.48-.41h-3.84c-.24 0-.43.17-.47.41l-.36 2.54c-.59.24-1.13.57-1.62.94l-2.39-.96c-.22-.08-.47 0-.59.22L2.74 8.87c-.12.21-.08.47.12.61l2.03 1.58c-.05.3-.09.63-.09.94s.02.64.07.94l-2.03 1.58a.49.49 0 0 0-.12.61l1.92 3.32c.12.22.37.29.59.22l2.39-.96c.5.38 1.03.7 1.62.94l.36 2.54c.05.24.24.41.48.41h3.84c.24 0 .44-.17.47-.41l.36-2.54c.59-.24 1.13-.56 1.62-.94l2.39.96c.22.08.47 0 .59-.22l1.92-3.32c.12-.22.07-.47-.12-.61l-2.01-1.58zM12 15.6c-1.98 0-3.6-1.62-3.6-3.6s1.62-3.6 3.6-3.6 3.6 1.62 3.6 3.6-1.62 3.6-3.6 3.6z"/></svg></div><div class="a nw card" style="transform:scaleX(0.9149);transform-origin:0 50%;left:87px;top:290px">LIS - LifeSP</div><div class="a nw cardv" style="transform:scaleX(0.9669);transform-origin:0 50%;left:361.0px;top:290px">5.28</div><div class="a" style="left:5px;top:332px;width:410px;height:40px;background:#fff;border:1px solid #c8c8c8;border-right:none"></div><div class="a" style="left:34px;top:339px"><svg width="25" height="25" viewBox="0 0 24 24"><path fill="#7b1fa2" d="M19.14 12.94c.04-.3.06-.61.06-.94 0-.32-.02-.64-.07-.94l2.03-1.58a.49.49 0 0 0 .12-.61l-1.92-3.32a.488.488 0 0 0-.59-.22l-2.39.96c-.5-.38-1.03-.7-1.62-.94l-.36-2.54a.484.484 0 0 0-.48-.41h-3.84c-.24 0-.43.17-.47.41l-.36 2.54c-.59.24-1.13.57-1.62.94l-2.39-.96c-.22-.08-.47 0-.59.22L2.74 8.87c-.12.21-.08.47.12.61l2.03 1.58c-.05.3-.09.63-.09.94s.02.64.07.94l-2.03 1.58a.49.49 0 0 0-.12.61l1.92 3.32c.12.22.37.29.59.22l2.39-.96c.5.38 1.03.7 1.62.94l.36 2.54c.05.24.24.41.48.41h3.84c.24 0 .44-.17.47-.41l.36-2.54c.59-.24 1.13-.56 1.62-.94l2.39.96c.22.08.47 0 .59-.22l1.92-3.32c.12-.22.07-.47-.12-.61l-2.01-1.58zM12 15.6c-1.98 0-3.6-1.62-3.6-3.6s1.62-3.6 3.6-3.6 3.6 1.62 3.6 3.6-1.62 3.6-3.6 3.6z"/></svg></div><div class="a nw card" style="transform:scaleX(0.9123);transform-origin:0 50%;left:87px;top:342px">LTD - LTD Post Tax</div><div class="a nw cardv" style="transform:scaleX(0.9754);transform-origin:0 50%;left:351.5px;top:342px">22.38</div><div class="a" style="left:5px;top:384px;width:410px;height:40px;background:#fff;border:1px solid #c8c8c8;border-right:none"></div><div class="a" style="left:34px;top:391px"><svg width="25" height="25" viewBox="0 0 24 24"><path fill="#7b1fa2" d="M19.14 12.94c.04-.3.06-.61.06-.94 0-.32-.02-.64-.07-.94l2.03-1.58a.49.49 0 0 0 .12-.61l-1.92-3.32a.488.488 0 0 0-.59-.22l-2.39.96c-.5-.38-1.03-.7-1.62-.94l-.36-2.54a.484.484 0 0 0-.48-.41h-3.84c-.24 0-.43.17-.47.41l-.36 2.54c-.59.24-1.13.57-1.62.94l-2.39-.96c-.22-.08-.47 0-.59.22L2.74 8.87c-.12.21-.08.47.12.61l2.03 1.58c-.05.3-.09.63-.09.94s.02.64.07.94l-2.03 1.58a.49.49 0 0 0-.12.61l1.92 3.32c.12.22.37.29.59.22l2.39-.96c.5.38 1.03.7 1.62.94l.36 2.54c.05.24.24.41.48.41h3.84c.24 0 .44-.17.47-.41l.36-2.54c.59-.24 1.13-.56 1.62-.94l2.39.96c.22.08.47 0 .59-.22l1.92-3.32c.12-.22.07-.47-.12-.61l-2.01-1.58zM12 15.6c-1.98 0-3.6-1.62-3.6-3.6s1.62-3.6 3.6-3.6 3.6 1.62 3.6 3.6-1.62 3.6-3.6 3.6z"/></svg></div><div class="a nw card" style="transform:scaleX(0.9479);transform-origin:0 50%;left:87px;top:394px">MED - Health Insuranc</div><div class="a nw cardv" style="transform:scaleX(0.8269);transform-origin:0 50%;left:350.0px;top:394px">131.67</div><div class="a" style="left:5px;top:436px;width:410px;height:40px;background:#fff;border:1px solid #c8c8c8;border-right:none"></div><div class="a" style="left:34px;top:443px"><svg width="25" height="25" viewBox="0 0 24 24"><path fill="#7b1fa2" d="M19.14 12.94c.04-.3.06-.61.06-.94 0-.32-.02-.64-.07-.94l2.03-1.58a.49.49 0 0 0 .12-.61l-1.92-3.32a.488.488 0 0 0-.59-.22l-2.39.96c-.5-.38-1.03-.7-1.62-.94l-.36-2.54a.484.484 0 0 0-.48-.41h-3.84c-.24 0-.43.17-.47.41l-.36 2.54c-.59.24-1.13.57-1.62.94l-2.39-.96c-.22-.08-.47 0-.59.22L2.74 8.87c-.12.21-.08.47.12.61l2.03 1.58c-.05.3-.09.63-.09.94s.02.64.07.94l-2.03 1.58a.49.49 0 0 0-.12.61l1.92 3.32c.12.22.37.29.59.22l2.39-.96c.5.38 1.03.7 1.62.94l.36 2.54c.05.24.24.41.48.41h3.84c.24 0 .44-.17.47-.41l.36-2.54c.59-.24 1.13-.56 1.62-.94l2.39.96c.22.08.47 0 .59-.22l1.92-3.32c.12-.22.07-.47-.12-.61l-2.01-1.58zM12 15.6c-1.98 0-3.6-1.62-3.6-3.6s1.62-3.6 3.6-3.6 3.6 1.62 3.6 3.6-1.62 3.6-3.6 3.6z"/></svg></div><div class="a nw card" style="transform:scaleX(0.9089);transform-origin:0 50%;left:87px;top:446px">STD - STD Post Tax</div><div class="a nw cardv" style="transform:scaleX(0.9871);transform-origin:0 50%;left:351.0px;top:446px">23.26</div><div class="a" style="left:5px;top:488px;width:410px;height:40px;background:#fff;border:1px solid #c8c8c8;border-right:none"></div><div class="a" style="left:34px;top:495px"><svg width="25" height="25" viewBox="0 0 24 24"><path fill="#7b1fa2" d="M19.14 12.94c.04-.3.06-.61.06-.94 0-.32-.02-.64-.07-.94l2.03-1.58a.49.49 0 0 0 .12-.61l-1.92-3.32a.488.488 0 0 0-.59-.22l-2.39.96c-.5-.38-1.03-.7-1.62-.94l-.36-2.54a.484.484 0 0 0-.48-.41h-3.84c-.24 0-.43.17-.47.41l-.36 2.54c-.59.24-1.13.57-1.62.94l-2.39-.96c-.22-.08-.47 0-.59.22L2.74 8.87c-.12.21-.08.47.12.61l2.03 1.58c-.05.3-.09.63-.09.94s.02.64.07.94l-2.03 1.58a.49.49 0 0 0-.12.61l1.92 3.32c.12.22.37.29.59.22l2.39-.96c.5.38 1.03.7 1.62.94l.36 2.54c.05.24.24.41.48.41h3.84c.24 0 .44-.17.47-.41l.36-2.54c.59-.24 1.13-.56 1.62-.94l2.39.96c.22.08.47 0 .59-.22l1.92-3.32c.12-.22.07-.47-.12-.61l-2.01-1.58zM12 15.6c-1.98 0-3.6-1.62-3.6-3.6s1.62-3.6 3.6-3.6 3.6 1.62 3.6 3.6-1.62 3.6-3.6 3.6z"/></svg></div><div class="a nw card" style="transform:scaleX(0.9095);transform-origin:0 50%;left:87px;top:498px">VIS - Vis Pre Tax</div><div class="a nw cardv" style="transform:scaleX(0.9367);transform-origin:0 50%;left:362.0px;top:498px">6.76</div></div><div class="a nw kl" style="left:581px;top:445px;width:100px;text-align:right">6.39</div><div class="a nw kl" style="left:648px;top:445px;width:100px;text-align:right;font-weight:bold">19.17</div><div class="a nw kl" style="left:581px;top:475px;width:100px;text-align:right">44.19</div><div class="a nw kl" style="left:648px;top:475px;width:100px;text-align:right;font-weight:bold">132.57</div><div class="a nw kl" style="left:581px;top:495px;width:100px;text-align:right">22.41</div><div class="a nw kl" style="left:648px;top:495px;width:100px;text-align:right;font-weight:bold">67.23</div><div class="a nw kl" style="left:581px;top:525px;width:100px;text-align:right">17.42</div><div class="a nw kl" style="left:648px;top:525px;width:100px;text-align:right;font-weight:bold">52.26</div><div class="a nw kl" style="left:581px;top:565px;width:100px;text-align:right">5.28</div><div class="a nw kl" style="left:648px;top:565px;width:100px;text-align:right;font-weight:bold">15.84</div><div class="a nw kl" style="left:581px;top:595px;width:100px;text-align:right">22.38</div><div class="a nw kl" style="left:648px;top:595px;width:100px;text-align:right;font-weight:bold">67.14</div><div class="a nw kl" style="left:581px;top:615px;width:100px;text-align:right">131.67</div><div class="a nw kl" style="left:648px;top:615px;width:100px;text-align:right;font-weight:bold">395.01</div><div class="a nw kl" style="left:581px;top:635px;width:100px;text-align:right">23.26</div><div class="a nw kl" style="left:648px;top:635px;width:100px;text-align:right;font-weight:bold">69.78</div><div class="a nw kl" style="left:581px;top:655px;width:100px;text-align:right">6.76</div><div class="a nw kl" style="left:648px;top:655px;width:100px;text-align:right;font-weight:bold">20.28</div><div class="a nw kl" style="left:581px;top:675px;width:100px;text-align:right">279.76</div><div class="a nw kl" style="left:648px;top:675px;width:100px;text-align:right;font-weight:bold">839.28</div>
  <div class="a" style="left:937px;top:248px;width:21px;height:728px;background:#f0f0f0"></div>
  <div class="a" style="left:943px;top:255px;width:0;height:0;border-left:5px solid transparent;border-right:5px solid transparent;border-bottom:6px solid #777"></div>
  <div class="a" style="left:944px;top:281px;width:8px;height:17px;background:#777;border-radius:4px"></div>
  <div class="a" style="left:943px;top:967px;width:0;height:0;border-left:5px solid transparent;border-right:5px solid transparent;border-top:6px solid #777"></div>

  <!-- sheet tabs -->
  <div class="a" style="left:1px;top:977px;width:957px;height:32px;background:#efefef"></div>
  <div class="a" style="left:112px;top:977px;width:720px;height:1px;background:#e2e2e2"></div>
  <svg class="a" style="left:28px;top:986px" width="8" height="13" viewBox="0 0 8 13"><path d="M7 1L1.5 6.5L7 12" stroke="#9a9a9a" stroke-width="1.2" fill="none"/></svg>
  <svg class="a" style="left:61px;top:986px" width="8" height="13" viewBox="0 0 8 13"><path d="M1 1L6.5 6.5L1 12" stroke="#333" stroke-width="1.2" fill="none"/></svg>
  <div class="a nw stab" style="transform:scaleX(0.9568);transform-origin:0 50%;left:127px;top:985px">CompOne (U4F)</div>
  <div class="a" style="left:239px;top:984px;width:1px;height:18px;background:#c8c8c8"></div>
  <div class="a nw stab" style="transform:scaleX(0.9229);transform-origin:0 50%;left:253px;top:985px">FDI (NR2-TXU)</div>
  <div class="a" style="left:357px;top:984px;width:1px;height:18px;background:#c8c8c8"></div>
  <div class="a" style="left:361px;top:977px;width:83px;height:28px;background:#fdfdfd;border-radius:0 0 5px 5px;box-shadow:0 1px 1.5px rgba(0,0,0,0.18)"></div>
  <div class="a nw stab" style="transform:scaleX(0.9828);transform-origin:0 50%;left:370px;top:982px;color:#111">HAA (6Y7)</div>
  <div class="a" style="left:370px;top:999px;width:66px;height:2px;background:#107c41"></div>
  <div class="a" style="left:448px;top:984px;width:1px;height:18px;background:#c8c8c8"></div>
  <div class="a nw stab" style="transform:scaleX(0.9048);transform-origin:0 50%;left:462px;top:985px">IME (FJV)</div>
  <div class="a" style="left:532px;top:984px;width:1px;height:18px;background:#c8c8c8"></div>
  <div class="a nw stab" style="transform:scaleX(0.9162);transform-origin:0 50%;left:546px;top:985px">MAI (RPC)</div>
  <div class="a" style="left:622px;top:984px;width:1px;height:18px;background:#c8c8c8"></div>
  <div class="a nw stab" style="transform:scaleX(0.8970);transform-origin:0 50%;left:636px;top:985px">MAI (RES)</div>
  <div class="a" style="left:710px;top:984px;width:1px;height:18px;background:#c8c8c8"></div>
  <div class="a nw stab" style="left:725px;top:985px;width:11px;overflow:hidden">Ri</div>
  <svg class="a" style="left:745px;top:990px" width="12" height="4" viewBox="0 0 12 4"><circle cx="2" cy="2" r="1.5" fill="#333"/><circle cx="6" cy="2" r="1.5" fill="#333"/><circle cx="10" cy="2" r="1.5" fill="#333"/></svg>
  <svg class="a" style="left:777px;top:986px" width="12" height="12" viewBox="0 0 12 12"><path d="M6 0V12M0 6H12" stroke="#333" stroke-width="1.2"/></svg>
  <svg class="a" style="left:813px;top:986px" width="4" height="13" viewBox="0 0 4 13"><circle cx="2" cy="2" r="1.2" fill="#333"/><circle cx="2" cy="6.5" r="1.2" fill="#333"/><circle cx="2" cy="11" r="1.2" fill="#333"/></svg>
  <div class="a" style="left:831px;top:982px;width:106px;height:21px;background:#f6f6f6;border-radius:10px"></div>
  <div class="a" style="left:837px;top:988px;width:0;height:0;border-top:4.5px solid transparent;border-bottom:4.5px solid transparent;border-right:6px solid #666"></div>
  <div class="a" style="left:891px;top:988px;width:29px;height:9px;background:#777;border-radius:5px"></div>
  <div class="a" style="left:926px;top:988px;width:0;height:0;border-top:4.5px solid transparent;border-bottom:4.5px solid transparent;border-left:6px solid #666"></div>

  <!-- status bar -->
  <div class="a" style="left:1px;top:1009px;width:957px;height:22px;background:#f3f3f3;border-top:1px solid #e4e4e4"></div>
  <div class="a nw sbar" style="transform:scaleX(0.8649);transform-origin:0 50%;left:13px;top:1013px;color:#555">Ready</div>
  <div class="a nw sbar" style="transform:scaleX(0.9828);transform-origin:0 50%;left:59px;top:1013px">Filter Mode</div>
  <svg class="a" style="left:137px;top:1013px" width="16" height="14" viewBox="0 0 16 14"><rect x="0.6" y="0.6" width="13" height="12" stroke="#333" stroke-width="1" fill="none"/><path d="M0.6 3.5H13.6M3 6H7M3 8.5H6" stroke="#333" stroke-width="1"/><circle cx="11" cy="9.5" r="3.3" stroke="#333" stroke-width="1" fill="#f3f3f3"/><circle cx="11" cy="9.5" r="1.6" fill="#333"/></svg>
  <svg class="a" style="left:169px;top:1012px" width="16" height="16" viewBox="0 0 16 16"><circle cx="7" cy="2" r="1.6" stroke="#333" stroke-width="1" fill="none"/><path d="M1 5L7 6L13 5M7 6V10L4 15M7 10L9 12M10 11L15 16M15 11L10 16" stroke="#333" stroke-width="1" fill="none"/></svg>
  <div class="a nw sbar" style="transform:scaleX(0.8787);transform-origin:0 50%;left:188px;top:1013px;font-weight:bold;color:#333">Accessibility: Investigate</div>
  <div class="a" style="left:648px;top:1010px;width:40px;height:21px;background:#dedede"></div>
  <svg class="a" style="left:661px;top:1013px" width="14" height="14" viewBox="0 0 14 14"><path d="M0.5 0.5H13.5V13.5H0.5ZM0.5 5H13.5M0.5 9H13.5M5 0.5V13.5M9 0.5V13.5" stroke="#222" stroke-width="1" fill="none"/></svg>
  <svg class="a" style="left:701px;top:1013px" width="14" height="14" viewBox="0 0 14 14"><rect x="0.5" y="0.5" width="13" height="13" stroke="#333" fill="none"/><rect x="3" y="3" width="8" height="8" stroke="#333" fill="none"/><path d="M4.5 5H9.5M4.5 7H9.5M4.5 9H9.5" stroke="#333" stroke-width="0.8"/></svg>
  <svg class="a" style="left:741px;top:1013px" width="14" height="14" viewBox="0 0 14 14"><path d="M0.5 13.5V0.5H13.5V13.5M0.5 9H13.5M5 0.5V9" stroke="#333" fill="none"/></svg>
  <div class="a" style="left:776px;top:1019px;width:8px;height:1px;background:#333"></div>
  <div class="a" style="left:787px;top:1019px;width:100px;height:1px;background:#555"></div>
  <div class="a" style="left:836px;top:1014px;width:4px;height:11px;background:#444;border-radius:1px"></div>
  <svg class="a" style="left:892px;top:1015px" width="9" height="9" viewBox="0 0 9 9"><path d="M4.5 0V9M0 4.5H9" stroke="#333" stroke-width="1"/></svg>
  <div class="a nw sbar" style="transform:scaleX(0.8794);transform-origin:0 50%;left:913px;top:1013px">100%</div>
  <div class="a" style="left:1px;top:1px;width:14px;height:1030px;background:linear-gradient(90deg,rgba(0,0,0,0.13),rgba(0,0,0,0));pointer-events:none;z-index:49"></div>
  <div class="a" style="left:0;top:0;width:960px;height:1032px;border:1px solid #6a6a6a;pointer-events:none;z-index:50"></div>
</div>

<!-- ================= TASKBAR ================= -->
<div class="a" id="taskbar" style="left:0;top:0;width:1920px;height:1080px;pointer-events:none">
  <div class="a" style="left:0;top:1032px;width:1920px;height:48px;background:#eeeeee"></div>
  <!-- weather -->
  <svg class="a" style="left:18px;top:1046px" width="28" height="22" viewBox="0 0 28 22"><defs><linearGradient id="cl" x1="0" y1="0" x2="0" y2="1"><stop offset="0" stop-color="#cfe3fb"/><stop offset="1" stop-color="#8db8ee"/></linearGradient></defs><circle cx="20" cy="7" r="5" fill="#f4a13a"/><path d="M5 20A4.5 4.5 0 0 1 5 11A6.5 6.5 0 0 1 17 9A5.5 5.5 0 0 1 22 20Z" fill="url(#cl)"/></svg>
  <div class="a" style="left:30px;top:1038px;width:16px;height:16px;border-radius:8px;background:#c42b1c"></div>
  <div class="a nw" style="left:30px;top:1039px;width:16px;text-align:center;font-size:11px;color:#fff;line-height:14px">1</div>
  <div class="a nw" style="transform:scaleX(0.9418);transform-origin:0 50%;left:50px;top:1041px;font-size:12px;color:#1a1a1a">35°F</div>
  <div class="a nw" style="transform:scaleX(0.9903);transform-origin:0 50%;left:50px;top:1057px;font-size:12.5px;color:#5a5a5a">Mostly cloudy</div>
  <!-- start -->
  <svg class="a" style="left:573px;top:1045px" width="23" height="23" viewBox="0 0 23 23"><defs><linearGradient id="wg" x1="0" y1="0" x2="1" y2="1"><stop offset="0" stop-color="#3ccbf4"/><stop offset="1" stop-color="#0a6fd6"/></linearGradient></defs><rect x="0" y="0" width="11" height="11" rx="1" fill="url(#wg)"/><rect x="12" y="0" width="11" height="11" rx="1" fill="url(#wg)"/><rect x="0" y="12" width="11" height="11" rx="1" fill="url(#wg)"/><rect x="12" y="12" width="11" height="11" rx="1" fill="url(#wg)"/></svg>
  <!-- search -->
  <div class="a" style="left:610px;top:1041px;width:218px;height:31px;border-radius:16px;background:#f9f9f9;border:1px solid #dcdcdc"></div>
  <svg class="a" style="left:620px;top:1048px" width="17" height="17" viewBox="0 0 17 17"><circle cx="7" cy="7" r="5.6" stroke="#1a1a1a" stroke-width="1.7" fill="none"/><path d="M11 11L15.5 15.5" stroke="#1a1a1a" stroke-width="1.9" stroke-linecap="round"/></svg>
  <div class="a nw" style="transform:scaleX(0.9017);transform-origin:0 50%;left:646px;top:1047px;font-size:14px;color:#5a5a5a">Search</div>
  <!-- task view -->
  <svg class="a" style="left:841px;top:1045px" width="24" height="22" viewBox="0 0 24 22"><rect x="8" y="1" width="15" height="14" rx="1" fill="#f3f3f3" stroke="#d8d8d8"/><rect x="1" y="8" width="15" height="13" rx="1" fill="#1e1e1e"/><rect x="8" y="8" width="8" height="7" fill="#b8b8b8"/></svg>
  <!-- explorer -->
  <svg class="a" style="left:885px;top:1046px" width="25" height="21" viewBox="0 0 25 21"><path d="M0 2Q0 0 2 0H9L11 3H23Q25 3 25 5V19Q25 21 23 21H2Q0 21 0 19Z" fill="#f2b61c"/><rect x="0" y="5" width="25" height="16" rx="1.5" fill="#fcd14a"/><rect x="6" y="13" width="13" height="6" rx="1" fill="#1f7ad6"/></svg>
  <div class="a" style="left:895px;top:1073px;width:6px;height:3px;border-radius:1.5px;background:#7a7a7a"></div>
  <!-- edge -->
  <svg class="a" style="left:928px;top:1044px" width="26" height="25" viewBox="0 0 26 25"><defs><linearGradient id="eg" x1="0" y1="0" x2="1" y2="1"><stop offset="0" stop-color="#35c1f1"/><stop offset="0.5" stop-color="#1fa0e0"/><stop offset="1" stop-color="#0c59a4"/></linearGradient></defs><path d="M13 1A12 12 0 0 1 25 12Q25 17 20 17Q15 17 15 13Q15 9 20 10Q19 4 12 4Q5 4 3 11Q4 3 13 1Z" fill="#4fd57a"/><path d="M3 11Q5 4 12 4Q19 4 20 10Q15 9 15 13Q15 17 20 17Q23 17 25 15Q23 23 13 24Q2 24 1 14Q1 12 3 11Z" fill="url(#eg)"/><rect x="0" y="15" width="10" height="9" rx="1" fill="#c9762a"/><rect x="3" y="13" width="4" height="3" fill="none" stroke="#8a4d15" stroke-width="1"/><rect x="0" y="18" width="10" height="1.2" fill="#f5b040"/></svg>
  <div class="a" style="left:938px;top:1073px;width:6px;height:3px;border-radius:1.5px;background:#7a7a7a"></div>
  <!-- teams active -->
  <div class="a" style="left:965px;top:1036px;width:40px;height:40px;border-radius:5px;background:#eeb5b0"></div>
  <div class="a" style="left:969px;top:1072px;width:32px;height:3px;border-radius:2px;background:#c42b1c"></div>
  <svg class="a" style="left:972px;top:1047px" width="26" height="22" viewBox="0 0 26 22"><circle cx="11" cy="4" r="3.5" fill="#7b83eb"/><circle cx="20" cy="6" r="3" fill="#5059c9"/><rect x="13" y="10" width="12" height="10" rx="4" fill="#5059c9"/><rect x="6" y="9" width="13" height="13" rx="4" fill="#7b83eb"/><rect x="0" y="8" width="11" height="11" rx="1.5" fill="#4b53bc"/><path d="M2.5 10.5H8.5M5.5 10.5V17" stroke="#fff" stroke-width="1.8"/></svg>
  <div class="a" style="left:986px;top:1039px;width:14px;height:14px;border-radius:7px;background:#c42b1c"></div>
  <div class="a nw" style="left:986px;top:1039px;width:14px;text-align:center;font-size:11px;color:#fff;line-height:14px">1</div>
  <!-- rdp -->
  <svg class="a" style="left:1017px;top:1044px" width="26" height="26" viewBox="0 0 26 26"><defs><linearGradient id="rd" x1="0" y1="0" x2="1" y2="1"><stop offset="0" stop-color="#8ec5ff"/><stop offset="0.5" stop-color="#2f6fd6"/><stop offset="1" stop-color="#0d3a8c"/></linearGradient></defs><path d="M2 2L20 4V17L2 15Z" fill="#dfe6ee" stroke="#8a96a3" stroke-width="0.8"/><path d="M4 4L18 5.6V15L4 13.4Z" fill="url(#rd)"/><path d="M9 16L12 17L11 19L7 19Z" fill="#9aa3ad"/><circle cx="18.5" cy="18.5" r="6" fill="#eef0f2" stroke="#8a8a8a" stroke-width="0.9"/><path d="M15.5 18.5H21.5M19.5 16.5L21.5 18.5L19.5 20.5M17.5 16.5L15.5 18.5L17.5 20.5" stroke="#2a8a3a" stroke-width="1.2" fill="none"/></svg>
  <!-- C icon -->
  <svg class="a" style="left:1061px;top:1044px" width="25" height="25" viewBox="0 0 25 25"><circle cx="12.5" cy="12.5" r="11.2" stroke="#1b5fc1" stroke-width="2.2" fill="none"/><path d="M18.5 8.5A7 7 0 1 0 18.5 16.5" stroke="#1b5fc1" stroke-width="2.4" fill="none"/><circle cx="12.5" cy="12.5" r="3.6" fill="#1b5fc1"/></svg>
  <!-- chrome active -->
  <div class="a" style="left:1098px;top:1037px;width:37px;height:39px;border-radius:5px;background:#f6f6f6;box-shadow:1px 0 0 #dedede"></div>
  <svg class="a" style="left:1104px;top:1044px" width="25" height="25" viewBox="0 0 24 24"><circle cx="12" cy="12" r="11.5" fill="#db4437"/><path d="M12 12L22 6A11.5 11.5 0 0 1 12 23.5Z" fill="#f4c20d"/><path d="M12 12L12 23.5A11.5 11.5 0 0 1 2 6Z" fill="#0f9d58"/><circle cx="12" cy="12" r="5.5" fill="#fff"/><circle cx="12" cy="12" r="4.3" fill="#4285f4"/></svg>
  <div class="a" style="left:1109px;top:1073px;width:15px;height:3px;border-radius:2px;background:#1a73d9"></div>
  <!-- outlook -->
  <svg class="a" style="left:1148px;top:1038px" width="32" height="32" viewBox="0 0 32 32"><path d="M8 12L22 8V24L8 26Z" fill="#1490df"/><path d="M14 14H28V26H14Z" fill="#28a8ea"/><rect x="2" y="16" width="12" height="11" rx="2" fill="#0a5eb5"/><circle cx="8" cy="21.5" r="3" stroke="#fff" stroke-width="1.7" fill="none"/><circle cx="24" cy="7" r="7" fill="#3fc1f2"/><rect x="20" y="4" width="8" height="6" stroke="#111" stroke-width="1.2" fill="none"/><path d="M20 4.5L24 7.5L28 4.5" stroke="#111" stroke-width="1.1" fill="none"/></svg>
  <div class="a" style="left:1158px;top:1073px;width:6px;height:3px;border-radius:1.5px;background:#7a7a7a"></div>
  <!-- onenote -->
  <svg class="a" style="left:1192px;top:1045px" width="23" height="23" viewBox="0 0 23 23"><rect x="6" y="0" width="17" height="23" rx="2" fill="#ca64ea"/><rect x="14" y="4" width="9" height="19" fill="#7719aa"/><rect x="0" y="8" width="11" height="11" rx="1.5" fill="#7719aa"/><path d="M2.5 17V10.5L8 17V10.5" stroke="#fff" stroke-width="1.5" fill="none"/></svg>
  <div class="a" style="left:1202px;top:1073px;width:6px;height:3px;border-radius:1.5px;background:#7a7a7a"></div>
  <!-- q purple -->
  <svg class="a" style="left:1237px;top:1045px" width="22" height="22" viewBox="0 0 22 22"><rect x="0" y="0" width="22" height="22" rx="5" fill="#3b1d86"/><circle cx="11" cy="11" r="5" stroke="#fff" stroke-width="2.3" fill="none"/><path d="M12 12L16 17" stroke="#fff" stroke-width="2.3"/><circle cx="16" cy="4" r="0.8" fill="#fff"/><circle cx="5" cy="5" r="0.8" fill="#fff"/></svg>
  <div class="a" style="left:1246px;top:1073px;width:6px;height:3px;border-radius:1.5px;background:#7a7a7a"></div>
  <!-- excel -->
  <svg class="a" style="left:1280px;top:1045px" width="23" height="23" viewBox="0 0 23 23"><rect x="5" y="0" width="18" height="23" rx="2" fill="#21a366"/><rect x="5" y="0" width="9" height="7" fill="#33c481"/><rect x="14" y="0" width="9" height="7" rx="1" fill="#7ddb9f"/><rect x="14" y="7" width="9" height="16" fill="#107c41"/><rect x="0" y="8" width="11" height="11" rx="1.5" fill="#185c37"/><path d="M2.5 10.5L8 17M8 10.5L2.5 17" stroke="#fff" stroke-width="1.6"/></svg>
  <div class="a" style="left:1290px;top:1073px;width:6px;height:3px;border-radius:1.5px;background:#7a7a7a"></div>
  <!-- calculator -->
  <svg class="a" style="left:1326px;top:1044px" width="21" height="25" viewBox="0 0 21 25"><rect x="0" y="0" width="21" height="25" rx="2" fill="#5f6b78"/><rect x="2.5" y="2.5" width="16" height="4" fill="#5fd3f3"/><g fill="#dfe6ee"><rect x="2.5" y="9" width="4" height="3.5"/><rect x="8.5" y="9" width="4" height="3.5"/><rect x="14.5" y="9" width="4" height="3.5"/><rect x="2.5" y="14" width="4" height="3.5"/><rect x="8.5" y="14" width="4" height="3.5"/><rect x="2.5" y="19" width="4" height="3.5"/><rect x="8.5" y="19" width="4" height="3.5"/></g><rect x="14.5" y="14" width="4" height="8.5" fill="#1e4f8c"/></svg>
  <div class="a" style="left:1334px;top:1073px;width:6px;height:3px;border-radius:1.5px;background:#7a7a7a"></div>
  <!-- tray -->
  <svg class="a" style="left:1699px;top:1052px" width="12" height="8" viewBox="0 0 12 8"><path d="M1 7L6 2L11 7" stroke="#1a1a1a" stroke-width="1.3" fill="none"/></svg>
  <svg class="a" style="left:1730px;top:1047px" width="13" height="18" viewBox="0 0 13 18"><rect x="3.8" y="0.8" width="5.4" height="10" rx="2.7" stroke="#2a5fc0" stroke-width="1.5" fill="none"/><path d="M1 8Q1 14 6.5 14Q12 14 12 8M6.5 14V17.5" stroke="#2a5fc0" stroke-width="1.5" fill="none"/></svg>
  <svg class="a" style="left:1760px;top:1048px" width="18" height="12" viewBox="0 0 18 12"><path d="M1 4.5A11.5 11.5 0 0 1 17 4.5M3.5 7A8 8 0 0 1 14.5 7M6 9.3A4.3 4.3 0 0 1 12 9.3" stroke="#1a1a1a" stroke-width="1.3" fill="none"/><circle cx="9" cy="11" r="1.2" fill="#1a1a1a"/></svg>
  <svg class="a" style="left:1785px;top:1047px" width="17" height="14" viewBox="0 0 17 14"><path d="M1 5H4L8 1.5V12.5L4 9H1Z" stroke="#1a1a1a" stroke-width="1.1" fill="none"/><path d="M10.5 4.5Q12 7 10.5 9.5M12.5 3Q15 7 12.5 11M14.5 1.5Q18 7 14.5 12.5" stroke="#1a1a1a" stroke-width="1.1" fill="none"/></svg>
  <svg class="a" style="left:1809px;top:1047px" width="21" height="14" viewBox="0 0 21 14"><rect x="0.8" y="3.3" width="17.4" height="9.4" rx="2" stroke="#1a1a1a" stroke-width="1.2" fill="#1f9d2a"/><rect x="18.5" y="6" width="2" height="4" fill="#1a1a1a"/><path d="M10 0.5L7.5 6H10.5L9 10" stroke="#fff" stroke-width="1.1" fill="none"/></svg>
  <div class="a nw" style="transform:scaleX(1.0038);transform-origin:0 50%;left:1850px;top:1041px;font-size:12px;color:#1a1a1a">11:22 AM</div>
  <div class="a nw" style="transform:scaleX(1.0114);transform-origin:0 50%;left:1846px;top:1057px;font-size:12px;color:#1a1a1a">3/24/2026</div>
</div>

</body></html>
